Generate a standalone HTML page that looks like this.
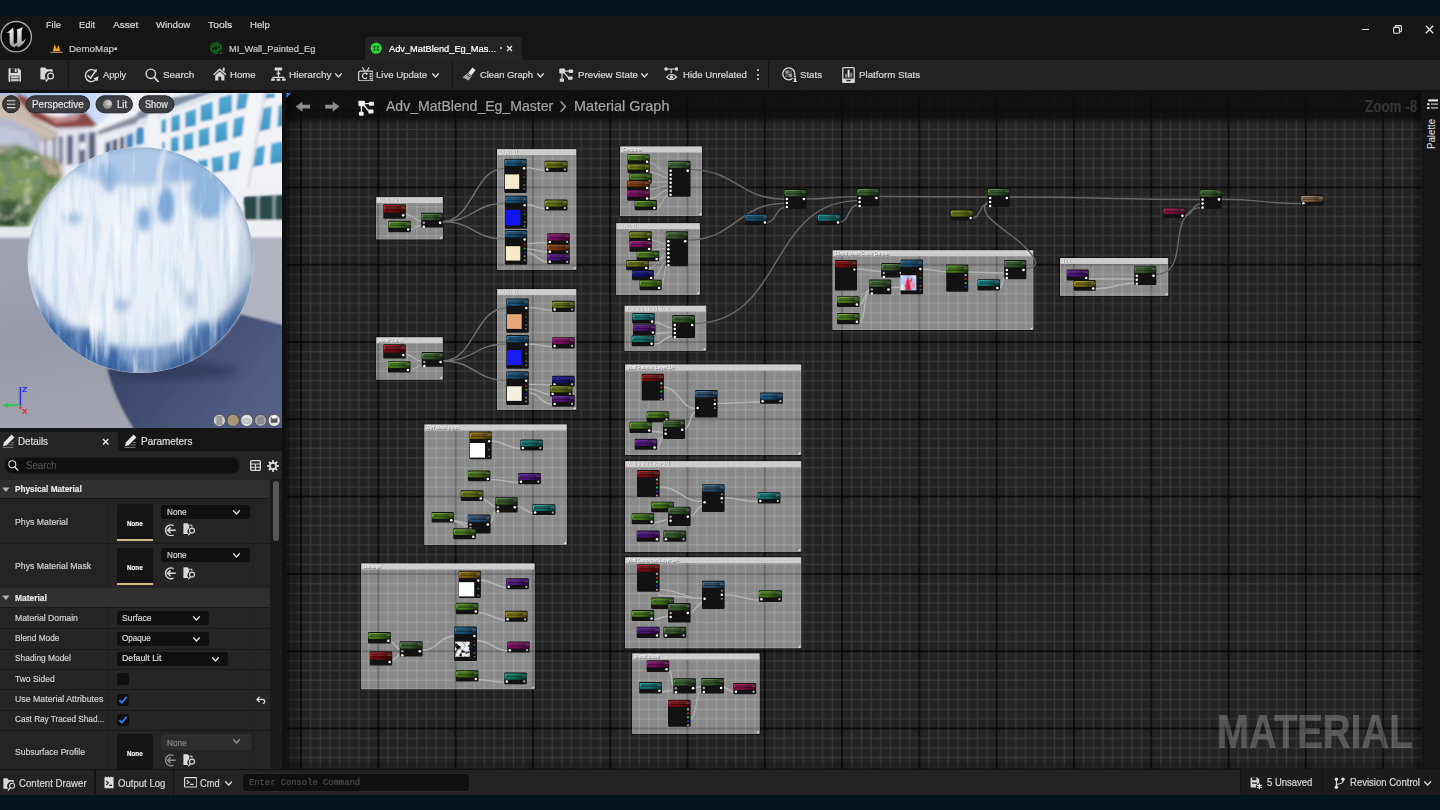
<!DOCTYPE html>
<html><head><meta charset="utf-8"><title>Adv_MatBlend_Eg_Master</title>
<style>
html,body{margin:0;padding:0}
body{width:1440px;height:810px;overflow:hidden;position:relative;background:#03141c;font-family:"Liberation Sans",sans-serif}
.b{position:absolute;display:block}
.t{position:absolute;display:block;white-space:pre;transform-origin:0 50%;-webkit-text-stroke:0.22px}
</style></head>
<body>
<div class="b" style="left:0.00px;top:15.60px;width:1440.00px;height:779.20px;background:#151515;"></div>
<div class="b" style="left:0.00px;top:59.50px;width:1440.00px;height:30.00px;background:#222222;"></div>
<div class="b" style="left:0.00px;top:89.50px;width:1440.00px;height:3.60px;background:#101010;"></div>
<svg class="b" style="left:0.00px;top:20.00px;" width="33" height="33" viewBox="0 0 33 33"><defs><linearGradient id="ug" x1="0" y1="0" x2="0" y2="1"><stop offset="0" stop-color="#f6f6f6"/><stop offset="0.6" stop-color="#c8c8c8"/><stop offset="1" stop-color="#8c8c8c"/></linearGradient></defs><circle cx="16.2" cy="16.7" r="15.2" fill="#090909" stroke="#a6a6a6" stroke-width="1.4"/><path d="M6.0 13.0 C8.6 12.0 10.8 10.2 12.8 7.6 C13.4 9.0 13.6 10.0 13.6 11.2 L13.6 22.4 C13.6 23.6 14.4 24.0 15.4 23.6 L17.2 22.6 L17.2 11.4 C17.2 10.6 16.8 10.0 16.2 9.8 C18.6 9.2 21.2 8.2 23.4 6.8 C22.2 8.6 21.6 9.8 21.6 11.4 L21.6 20.8 C21.6 21.8 22.4 21.8 23.4 21.0 L26.0 18.6 C25.0 22.4 22.0 25.6 18.4 27.4 L16.4 25.6 L14.6 27.6 C11.8 27.0 9.6 25.2 9.6 22.6 L9.6 13.6 C9.6 12.6 8.6 12.4 6.0 13.0 Z" fill="url(#ug)"/></svg>
<div class="b" style="left:365.00px;top:37.00px;width:157.00px;height:23.00px;background:#242424;border-radius:4px 4px 0 0"></div>
<svg class="b" style="left:50.00px;top:42.60px;" width="13" height="11" viewBox="0 0 13 11"><path d="M2.8 8.2 L3.6 5 L4.8 1 L6 5 L6.6 6 L7.2 5 L8.2 2 L9.4 5 L10.2 8.2 Z" fill="#f0a81c"/><rect x="0.4" y="8.8" width="12.2" height="1" fill="#c89a6a"/></svg>
<svg class="b" style="left:209.50px;top:41.50px;" width="13.5" height="13.5" viewBox="0 0 13.5 13.5"><circle cx="6" cy="6" r="5.2" fill="#0e2a12" stroke="#1f7a2a" stroke-width="1.2"/><path d="M3 6 A3 3 0 0 1 8.4 4.2 M9 6 A3 3 0 0 1 3.6 7.8" stroke="#1f8a2c" stroke-width="1.1" fill="none"/><circle cx="10.6" cy="10.8" r="2.4" fill="#151515"/><path d="M9.2 10.8 L10.4 12 L12.2 9.8" stroke="#1f8a2c" stroke-width="1" fill="none"/></svg>
<svg class="b" style="left:370.20px;top:41.80px;" width="12.4" height="12.4" viewBox="0 0 12.4 12.4"><circle cx="6.2" cy="6.2" r="5.6" fill="#2fd03a"/><path d="M3.2 3.4 L6.2 5 L9.2 3.4 L8 6.2 L9.2 9 L6.2 7.6 L3.2 9 L4.4 6.2 Z" fill="#0c3a10"/><circle cx="6.2" cy="6.2" r="1.3" fill="#2fd03a"/></svg>
<div class="b" style="left:499.60px;top:47.20px;width:2.20px;height:2.20px;background:#dddddd;border-radius:50%"></div>
<svg class="b" style="left:506.00px;top:44.60px;" width="7" height="7" viewBox="0 0 7 7"><path d="M1 1 L6 6 M6 1 L1 6" stroke="#e8e8e8" stroke-width="1.3"/></svg>
<div class="b" style="left:1361.80px;top:28.60px;width:7.60px;height:1.20px;background:#e0e0e0;"></div>
<svg class="b" style="left:1392.60px;top:24.60px;" width="9" height="9" viewBox="0 0 9 9"><rect x="0.6" y="2.4" width="5.8" height="5.8" rx="1" fill="none" stroke="#e0e0e0" stroke-width="1.1"/><path d="M2.4 2.2 V1.4 Q2.4 0.6 3.2 0.6 H7.6 Q8.4 0.6 8.4 1.4 V5.8 Q8.4 6.6 7.6 6.6 H6.6" fill="none" stroke="#e0e0e0" stroke-width="1.1"/></svg>
<svg class="b" style="left:1424.60px;top:24.60px;" width="9" height="9" viewBox="0 0 9 9"><path d="M0.8 0.8 L8.2 8.2 M8.2 0.8 L0.8 8.2" stroke="#e8e8e8" stroke-width="1.3"/></svg>
<svg class="b" style="left:7.60px;top:67.80px;" width="14" height="14" viewBox="0 0 14 14"><path d="M0.5 1 Q0.5 0.3 1.2 0.3 L10.6 0.3 L13 2.6 L13 13 Q13 13.7 12.3 13.7 L1.2 13.7 Q0.5 13.7 0.5 13 Z" fill="#d8d8d8"/><rect x="2.6" y="0.3" width="7" height="4.6" fill="#2a2a2a"/><rect x="6.8" y="1" width="1.8" height="3" fill="#d8d8d8"/><rect x="2.2" y="7.6" width="9.2" height="6.1" fill="#2a2a2a"/><rect x="2.9" y="8.3" width="7.8" height="2" fill="#d8d8d8"/><rect x="2.9" y="11.2" width="7.8" height="1.7" fill="#d8d8d8"/></svg>
<svg class="b" style="left:40.00px;top:67.20px;" width="15.5" height="15" viewBox="0 0 15.5 15"><path d="M0.4 1.2 Q0.4 0.4 1.2 0.4 L5 0.4 L6.6 2.2 L12.6 2.2 L12.6 5.4 A4.6 4.6 0 0 0 6.6 12.6 L1.2 12.6 Q0.4 12.6 0.4 11.8 Z" fill="#d8d8d8"/><circle cx="10.6" cy="9" r="2.9" fill="none" stroke="#d8d8d8" stroke-width="1.3"/><path d="M8.6 11.2 L6.2 14" stroke="#d8d8d8" stroke-width="1.5" stroke-linecap="round"/></svg>
<div class="b" style="left:67.80px;top:61.00px;width:1.00px;height:27.00px;background:#131313;"></div>
<svg class="b" style="left:84.00px;top:67.60px;" width="15" height="15" viewBox="0 0 15 15"><path d="M12.4 4.2 A6 6 0 1 0 13.2 9.4" fill="none" stroke="#d8d8d8" stroke-width="1.4"/><path d="M14.6 8.2 L13.6 13.2 L9.4 10.6 Z" fill="#d8d8d8"/><path d="M3.6 7.4 L6.6 10.2 L12.6 1.4" fill="none" stroke="#d8d8d8" stroke-width="1.5"/></svg>
<svg class="b" style="left:145.00px;top:67.60px;" width="14.5" height="14.5" viewBox="0 0 14.5 14.5"><circle cx="5.8" cy="5.8" r="4.7" fill="none" stroke="#d8d8d8" stroke-width="1.4"/><path d="M9.2 9.4 L13.2 13.6" stroke="#d8d8d8" stroke-width="1.7" stroke-linecap="round"/></svg>
<svg class="b" style="left:212.60px;top:67.40px;" width="14" height="14" viewBox="0 0 14 14"><path d="M6.8 1.2 L13.4 7.2 L12.4 8.2 L6.8 3.2 L1.2 8.2 L0.2 7.2 Z" fill="#d8d8d8"/><path d="M2.2 8.4 L6.8 4.4 L11.4 8.4 L11.4 13.6 L8.2 13.6 L8.2 9.8 L5.4 9.8 L5.4 13.6 L2.2 13.6 Z" fill="#d8d8d8"/><rect x="9.8" y="0.6" width="1.8" height="3.6" fill="#d8d8d8"/></svg>
<svg class="b" style="left:270.60px;top:67.40px;" width="15" height="14" viewBox="0 0 15 14"><rect x="3.6" y="0.4" width="7.6" height="3.2" rx="0.5" fill="#d8d8d8"/><rect x="5.6" y="5.6" width="3.6" height="1.8" fill="#d8d8d8"/><path d="M7.4 3.6 V10.4 M2 12 V10.4 H12.8 V12" fill="none" stroke="#d8d8d8" stroke-width="1.1"/><rect x="0.2" y="11.6" width="3.6" height="2.2" fill="#d8d8d8"/><rect x="5.6" y="11.6" width="3.6" height="2.2" fill="#d8d8d8"/><rect x="11" y="11.6" width="3.6" height="2.2" fill="#d8d8d8"/></svg>
<svg class="b" style="left:335.00px;top:73.00px;" width="7" height="5" viewBox="0 0 7 5"><path d="M0.6 0.8 L3.5 4 L6.4 0.8" fill="none" stroke="#d8d8d8" stroke-width="1.3" stroke-linecap="round" stroke-linejoin="round"/></svg>
<svg class="b" style="left:357.60px;top:67.00px;" width="15.6" height="14.4" viewBox="0 0 15.6 14.4"><path d="M4.4 0.4 L6.8 4 M11.2 0.4 L8.8 4" stroke="#d8d8d8" stroke-width="1.1" fill="none"/><rect x="0.6" y="4.2" width="14.4" height="9.6" rx="1.6" fill="none" stroke="#d8d8d8" stroke-width="1.2"/><path d="M8.4 6.6 A2.6 2.6 0 1 0 9 10.6" fill="none" stroke="#d8d8d8" stroke-width="1.2"/><path d="M7.4 5.6 L10.2 6.2 L8.6 8.4 Z" fill="#d8d8d8"/><rect x="11.6" y="6" width="2" height="1.6" fill="#d8d8d8"/><rect x="11.6" y="8.6" width="2" height="1.6" fill="#d8d8d8"/><rect x="11.6" y="11" width="2" height="1.4" fill="#d8d8d8"/></svg>
<svg class="b" style="left:432.00px;top:73.00px;" width="7" height="5" viewBox="0 0 7 5"><path d="M0.6 0.8 L3.5 4 L6.4 0.8" fill="none" stroke="#d8d8d8" stroke-width="1.3" stroke-linecap="round" stroke-linejoin="round"/></svg>
<div class="b" style="left:451.60px;top:61.00px;width:1.00px;height:27.00px;background:#131313;"></div>
<svg class="b" style="left:462.00px;top:67.40px;" width="14.5" height="14.5" viewBox="0 0 14.5 14.5"><path d="M10.4 0.6 L13.6 3 L9.4 8.4 L6.2 6 Z" fill="#e6e6e6"/><path d="M5.4 6 L9.8 9.4 L6.6 13.6 L0.6 10.6 Z" fill="#a8a8a8"/><path d="M4.6 7.4 L8.6 10.4" stroke="#222" stroke-width="0.9"/></svg>
<svg class="b" style="left:537.00px;top:73.00px;" width="7" height="5" viewBox="0 0 7 5"><path d="M0.6 0.8 L3.5 4 L6.4 0.8" fill="none" stroke="#d8d8d8" stroke-width="1.3" stroke-linecap="round" stroke-linejoin="round"/></svg>
<svg class="b" style="left:559.40px;top:67.60px;" width="14.6" height="14.4" viewBox="0 0 14.6 14.4"><rect x="0.3" y="0.6" width="5.8" height="4.8" rx="1" fill="#d8d8d8"/><rect x="9.6" y="1.6" width="4.6" height="3.4" rx="0.9" fill="#d8d8d8"/><rect x="9" y="8.4" width="4.6" height="3.4" rx="0.9" fill="#d8d8d8"/><rect x="0.8" y="10.4" width="4.2" height="3.4" rx="0.9" fill="#d8d8d8"/><path d="M6 3.2 H9.8 M3 5.2 V10.6 M5.2 4.6 L9.4 9.6" stroke="#d8d8d8" stroke-width="1.2" fill="none"/></svg>
<svg class="b" style="left:641.40px;top:73.00px;" width="7" height="5" viewBox="0 0 7 5"><path d="M0.6 0.8 L3.5 4 L6.4 0.8" fill="none" stroke="#d8d8d8" stroke-width="1.3" stroke-linecap="round" stroke-linejoin="round"/></svg>
<svg class="b" style="left:663.80px;top:67.40px;" width="14.6" height="14" viewBox="0 0 14.6 14"><circle cx="2" cy="2" r="1.8" fill="#d8d8d8"/><circle cx="12.6" cy="2" r="1.8" fill="#d8d8d8"/><path d="M2 2 H12.6 M7.2 2 V6" stroke="#d8d8d8" stroke-width="1.1"/><path d="M2.4 10 Q7.4 4.6 12.6 10 Q7.4 15 2.4 10 Z" fill="none" stroke="#d8d8d8" stroke-width="1.1"/><circle cx="7.5" cy="10" r="1.7" fill="#d8d8d8"/></svg>
<div class="b" style="left:757.20px;top:69.40px;width:1.80px;height:1.80px;background:#d8d8d8;border-radius:50%"></div>
<div class="b" style="left:757.20px;top:73.80px;width:1.80px;height:1.80px;background:#d8d8d8;border-radius:50%"></div>
<div class="b" style="left:757.20px;top:78.20px;width:1.80px;height:1.80px;background:#d8d8d8;border-radius:50%"></div>
<div class="b" style="left:768.40px;top:61.00px;width:1.00px;height:27.00px;background:#131313;"></div>
<svg class="b" style="left:781.60px;top:67.00px;" width="15.4" height="15.4" viewBox="0 0 15.4 15.4"><circle cx="6.8" cy="6.8" r="6" fill="none" stroke="#d8d8d8" stroke-width="1.3"/><rect x="3.4" y="3.4" width="3.4" height="3.4" fill="#9a9a9a"/><rect x="6.8" y="6.8" width="3.4" height="3.4" fill="#9a9a9a"/><rect x="6.8" y="3.4" width="3.4" height="3.4" fill="#555"/><rect x="3.4" y="6.8" width="3.4" height="3.4" fill="#555"/><rect x="10.6" y="8.6" width="4.6" height="6.4" fill="#222"/><rect x="12.2" y="8.8" width="1.8" height="1.6" fill="#eee"/><path d="M11.6 11.2 H14 V14 H15 V15 H11.4 V14 H12.4 V12.2 H11.6 Z" fill="#eee"/></svg>
<svg class="b" style="left:841.60px;top:66.60px;" width="13" height="16.2" viewBox="0 0 13 16.2"><rect x="0.8" y="0.6" width="11.4" height="15" rx="1.2" fill="none" stroke="#d8d8d8" stroke-width="1.3"/><rect x="0.8" y="11.6" width="11.4" height="4" fill="#d8d8d8"/><rect x="4.4" y="12.8" width="4.2" height="1.5" fill="#222"/><rect x="3" y="7" width="1.8" height="3.4" fill="#8a8a8a"/><rect x="5.6" y="2.8" width="1.9" height="7.6" fill="#f0f0f0"/><rect x="8.3" y="5.6" width="1.8" height="4.8" fill="#8a8a8a"/></svg>
<div class="b" style="left:0.00px;top:428.20px;width:282.20px;height:340.40px;background:#151515;"></div>
<div class="b" style="left:282.20px;top:93.00px;width:4.00px;height:675.60px;background:#101010;"></div>
<div class="b" style="left:0.00px;top:432.00px;width:118.40px;height:19.60px;background:#242424;border-radius:0 3px 0 0"></div>
<svg class="b" style="left:1.60px;top:434.40px;" width="13" height="14" viewBox="0 0 13 14"><path d="M9.6 0.6 L12.4 3.4 L4.6 11.2 L1 12.2 L1.9 8.4 Z" fill="#e6e6e6"/><path d="M0.4 13.4 H11.6 M6.4 10.9 H11.6 M8.8 8.5 H11.6" stroke="#777" stroke-width="1"/></svg>
<svg class="b" style="left:101.60px;top:437.60px;" width="7.4" height="7.4" viewBox="0 0 7.4 7.4"><path d="M1 1 L6.4 6.4 M6.4 1 L1 6.4" stroke="#e8e8e8" stroke-width="1.4"/></svg>
<svg class="b" style="left:123.80px;top:434.40px;" width="13" height="14" viewBox="0 0 13 14"><path d="M9.6 0.6 L12.4 3.4 L4.6 11.2 L1 12.2 L1.9 8.4 Z" fill="#e6e6e6"/><path d="M0.4 13.4 H11.6 M6.4 10.9 H11.6 M8.8 8.5 H11.6" stroke="#777" stroke-width="1"/></svg>
<div class="b" style="left:0.00px;top:451.40px;width:282.20px;height:317.20px;background:#242424;"></div>
<div class="b" style="left:4.60px;top:457.60px;width:234.40px;height:15.60px;background:#0f0f0f;border-radius:8px;box-shadow:0 0 0 1px #1a1a1a"></div>
<svg class="b" style="left:8.40px;top:460.20px;" width="10.73" height="10.73" viewBox="0 0 14.5 14.5"><circle cx="5.8" cy="5.8" r="4.7" fill="none" stroke="#e0e0e0" stroke-width="1.4"/><path d="M9.2 9.4 L13.2 13.6" stroke="#e0e0e0" stroke-width="1.7" stroke-linecap="round"/></svg>
<svg class="b" style="left:249.60px;top:460.20px;" width="11" height="11" viewBox="0 0 11 11"><rect x="0.7" y="0.7" width="9.6" height="9.6" rx="1" fill="none" stroke="#e0e0e0" stroke-width="1.3"/><path d="M0.7 4 H10.3 M0.7 7.2 H10.3 M5.5 4 V10.3" stroke="#e0e0e0" stroke-width="1.1"/></svg>
<svg class="b" style="left:267.00px;top:460.00px;" width="12" height="12" viewBox="0 0 12 12"><g transform="translate(6,6)"><circle r="3.1" fill="none" stroke="#e0e0e0" stroke-width="1.7"/><rect x="-0.9" y="-5.9" width="1.8" height="2.3" fill="#e0e0e0" transform="rotate(0)"/><rect x="-0.9" y="-5.9" width="1.8" height="2.3" fill="#e0e0e0" transform="rotate(45)"/><rect x="-0.9" y="-5.9" width="1.8" height="2.3" fill="#e0e0e0" transform="rotate(90)"/><rect x="-0.9" y="-5.9" width="1.8" height="2.3" fill="#e0e0e0" transform="rotate(135)"/><rect x="-0.9" y="-5.9" width="1.8" height="2.3" fill="#e0e0e0" transform="rotate(180)"/><rect x="-0.9" y="-5.9" width="1.8" height="2.3" fill="#e0e0e0" transform="rotate(225)"/><rect x="-0.9" y="-5.9" width="1.8" height="2.3" fill="#e0e0e0" transform="rotate(270)"/><rect x="-0.9" y="-5.9" width="1.8" height="2.3" fill="#e0e0e0" transform="rotate(315)"/></g></svg>
<div class="b" style="left:270.00px;top:479.40px;width:12.20px;height:289.20px;background:#1a1a1a;"></div>
<div class="b" style="left:273.20px;top:481.00px;width:5.80px;height:59.60px;background:#575757;border-radius:3px"></div>
<div class="b" style="left:0.00px;top:480.00px;width:270.00px;height:18.40px;background:#2f2f2f;"></div>
<svg class="b" style="left:1.60px;top:486.60px;" width="8" height="5.4" viewBox="0 0 8 5.4"><path d="M0.3 0.4 H7.5 L3.9 5 Z" fill="#b4b4b4"/></svg>
<div class="b" style="left:0.00px;top:498.40px;width:270.00px;height:1.00px;background:#191919;"></div>
<div class="b" style="left:117.00px;top:504.00px;width:36.40px;height:36.60px;background:#141414;border-radius:2px"></div>
<div class="b" style="left:161.20px;top:505.00px;width:89.20px;height:13.80px;background:#0f0f0f;border-radius:3px"></div>
<svg class="b" style="left:233.40px;top:509.60px;" width="7" height="5" viewBox="0 0 7 5"><path d="M0.6 0.8 L3.5 4 L6.4 0.8" fill="none" stroke="#e0e0e0" stroke-width="1.3" stroke-linecap="round" stroke-linejoin="round"/></svg>
<svg class="b" style="left:163.80px;top:523.80px;" width="12.6" height="12.6" viewBox="0 0 12.6 12.6"><path d="M9.6 1.6 A5.4 5.4 0 1 0 9.6 11" fill="none" stroke="#d8d8d8" stroke-width="1.3"/><path d="M11.8 6.3 H4 M6.6 3.4 L3.6 6.3 L6.6 9.2" fill="none" stroke="#d8d8d8" stroke-width="1.5"/></svg>
<svg class="b" style="left:183.40px;top:523.40px;" width="13" height="12.6" viewBox="0 0 13 12.6"><path d="M0.4 0.9 Q0.4 0.3 1 0.3 L4.6 0.3 L6.2 2 L6.2 5 A4 4 0 0 0 5.4 11 L1 11 Q0.4 11 0.4 10.4 Z" fill="#d8d8d8"/><path d="M6.4 2.2 H9 V4" stroke="#d8d8d8" stroke-width="1" fill="none"/><circle cx="9" cy="7.6" r="2.5" fill="none" stroke="#d8d8d8" stroke-width="1.2"/><path d="M7.4 9.6 L5.6 11.8" stroke="#d8d8d8" stroke-width="1.3" stroke-linecap="round"/></svg>
<div class="b" style="left:117.00px;top:539.40px;width:36.40px;height:1.40px;background:#cdbd84;"></div>
<div class="b" style="left:0.00px;top:543.20px;width:270.00px;height:1.00px;background:#191919;"></div>
<div class="b" style="left:117.00px;top:547.60px;width:36.40px;height:37.00px;background:#141414;border-radius:2px"></div>
<div class="b" style="left:161.20px;top:548.40px;width:89.20px;height:14.00px;background:#0f0f0f;border-radius:3px"></div>
<svg class="b" style="left:233.40px;top:553.00px;" width="7" height="5" viewBox="0 0 7 5"><path d="M0.6 0.8 L3.5 4 L6.4 0.8" fill="none" stroke="#e0e0e0" stroke-width="1.3" stroke-linecap="round" stroke-linejoin="round"/></svg>
<svg class="b" style="left:163.80px;top:567.40px;" width="12.6" height="12.6" viewBox="0 0 12.6 12.6"><path d="M9.6 1.6 A5.4 5.4 0 1 0 9.6 11" fill="none" stroke="#d8d8d8" stroke-width="1.3"/><path d="M11.8 6.3 H4 M6.6 3.4 L3.6 6.3 L6.6 9.2" fill="none" stroke="#d8d8d8" stroke-width="1.5"/></svg>
<svg class="b" style="left:183.40px;top:567.00px;" width="13" height="12.6" viewBox="0 0 13 12.6"><path d="M0.4 0.9 Q0.4 0.3 1 0.3 L4.6 0.3 L6.2 2 L6.2 5 A4 4 0 0 0 5.4 11 L1 11 Q0.4 11 0.4 10.4 Z" fill="#d8d8d8"/><path d="M6.4 2.2 H9 V4" stroke="#d8d8d8" stroke-width="1" fill="none"/><circle cx="9" cy="7.6" r="2.5" fill="none" stroke="#d8d8d8" stroke-width="1.2"/><path d="M7.4 9.6 L5.6 11.8" stroke="#d8d8d8" stroke-width="1.3" stroke-linecap="round"/></svg>
<div class="b" style="left:117.00px;top:583.40px;width:36.40px;height:1.40px;background:#cdbd84;"></div>
<div class="b" style="left:0.00px;top:587.60px;width:270.00px;height:1.00px;background:#191919;"></div>
<div class="b" style="left:0.00px;top:588.40px;width:270.00px;height:18.40px;background:#2f2f2f;"></div>
<svg class="b" style="left:1.60px;top:595.00px;" width="8" height="5.4" viewBox="0 0 8 5.4"><path d="M0.3 0.4 H7.5 L3.9 5 Z" fill="#b4b4b4"/></svg>
<div class="b" style="left:0.00px;top:606.80px;width:270.00px;height:1.00px;background:#191919;"></div>
<div class="b" style="left:117.20px;top:611.40px;width:92.20px;height:14.00px;background:#0f0f0f;border-radius:3px"></div>
<svg class="b" style="left:193.20px;top:616.30px;" width="7" height="5" viewBox="0 0 7 5"><path d="M0.6 0.8 L3.5 4 L6.4 0.8" fill="none" stroke="#e6e6e6" stroke-width="1.3" stroke-linecap="round" stroke-linejoin="round"/></svg>
<div class="b" style="left:0.00px;top:628.20px;width:270.00px;height:1.00px;background:#191919;"></div>
<div class="b" style="left:117.20px;top:631.60px;width:92.20px;height:14.00px;background:#0f0f0f;border-radius:3px"></div>
<svg class="b" style="left:193.20px;top:636.50px;" width="7" height="5" viewBox="0 0 7 5"><path d="M0.6 0.8 L3.5 4 L6.4 0.8" fill="none" stroke="#e6e6e6" stroke-width="1.3" stroke-linecap="round" stroke-linejoin="round"/></svg>
<div class="b" style="left:0.00px;top:648.50px;width:270.00px;height:1.00px;background:#191919;"></div>
<div class="b" style="left:117.20px;top:651.80px;width:110.40px;height:14.10px;background:#0f0f0f;border-radius:3px"></div>
<svg class="b" style="left:212.20px;top:656.70px;" width="7" height="5" viewBox="0 0 7 5"><path d="M0.6 0.8 L3.5 4 L6.4 0.8" fill="none" stroke="#e6e6e6" stroke-width="1.3" stroke-linecap="round" stroke-linejoin="round"/></svg>
<div class="b" style="left:0.00px;top:668.80px;width:270.00px;height:1.00px;background:#191919;"></div>
<div class="b" style="left:117.20px;top:673.20px;width:11.80px;height:11.80px;background:#0f0f0f;border-radius:2px"></div>
<div class="b" style="left:0.00px;top:689.20px;width:270.00px;height:1.00px;background:#191919;"></div>
<div class="b" style="left:117.20px;top:693.80px;width:11.80px;height:11.80px;background:#0f0f0f;border-radius:2px"></div>
<svg class="b" style="left:117.20px;top:693.80px;" width="11.8" height="11.8" viewBox="0 0 11.8 11.8"><path d="M2.4 6.2 L4.8 8.6 L9.6 2.8" fill="none" stroke="#2a7fe8" stroke-width="1.9"/></svg>
<svg class="b" style="left:256.40px;top:695.60px;" width="10" height="8" viewBox="0 0 10 8"><path d="M3.6 0.8 L0.9 3.4 L3.6 6 M1.2 3.4 H6.4 Q8.8 3.4 8.8 5.6 Q8.8 7.4 6.8 7.4" fill="none" stroke="#dcdcdc" stroke-width="1.2"/></svg>
<div class="b" style="left:0.00px;top:709.60px;width:270.00px;height:1.00px;background:#191919;"></div>
<div class="b" style="left:117.20px;top:714.40px;width:11.80px;height:11.80px;background:#0f0f0f;border-radius:2px"></div>
<svg class="b" style="left:117.20px;top:714.40px;" width="11.8" height="11.8" viewBox="0 0 11.8 11.8"><path d="M2.4 6.2 L4.8 8.6 L9.6 2.8" fill="none" stroke="#2a7fe8" stroke-width="1.9"/></svg>
<div class="b" style="left:0.00px;top:730.20px;width:270.00px;height:1.00px;background:#191919;"></div>
<div class="b" style="left:117.00px;top:734.40px;width:36.40px;height:34.60px;background:#141414;border-radius:2px"></div>
<div class="b" style="left:161.20px;top:734.00px;width:90.00px;height:16.00px;background:#2e2e2e;border-radius:3px"></div>
<svg class="b" style="left:233.40px;top:738.60px;" width="7" height="5" viewBox="0 0 7 5"><path d="M0.6 0.8 L3.5 4 L6.4 0.8" fill="none" stroke="#9a9a9a" stroke-width="1.3" stroke-linecap="round" stroke-linejoin="round"/></svg>
<svg class="b" style="left:163.80px;top:754.40px;" width="12.6" height="12.6" viewBox="0 0 12.6 12.6"><path d="M9.6 1.6 A5.4 5.4 0 1 0 9.6 11" fill="none" stroke="#8c8c8c" stroke-width="1.3"/><path d="M11.8 6.3 H4 M6.6 3.4 L3.6 6.3 L6.6 9.2" fill="none" stroke="#8c8c8c" stroke-width="1.5"/></svg>
<svg class="b" style="left:183.40px;top:754.00px;" width="13" height="12.6" viewBox="0 0 13 12.6"><path d="M0.4 0.9 Q0.4 0.3 1 0.3 L4.6 0.3 L6.2 2 L6.2 5 A4 4 0 0 0 5.4 11 L1 11 Q0.4 11 0.4 10.4 Z" fill="#d8d8d8"/><path d="M6.4 2.2 H9 V4" stroke="#d8d8d8" stroke-width="1" fill="none"/><circle cx="9" cy="7.6" r="2.5" fill="none" stroke="#d8d8d8" stroke-width="1.2"/><path d="M7.4 9.6 L5.6 11.8" stroke="#d8d8d8" stroke-width="1.3" stroke-linecap="round"/></svg>
<div class="b" style="left:106.60px;top:499.00px;width:1.00px;height:89.00px;background:rgba(0,0,0,0.10);"></div>
<div class="b" style="left:106.60px;top:607.00px;width:1.00px;height:162.00px;background:rgba(0,0,0,0.10);"></div>
<div class="b" style="left:252.60px;top:499.00px;width:1.00px;height:89.00px;background:rgba(0,0,0,0.12);"></div>
<div class="b" style="left:252.60px;top:607.00px;width:1.00px;height:162.00px;background:rgba(0,0,0,0.12);"></div>
<div class="b" style="left:0.00px;top:768.60px;width:1440.00px;height:26.20px;background:#222222;"></div>
<div class="b" style="left:0.00px;top:768.60px;width:1440.00px;height:1.00px;background:#121212;"></div>
<div class="b" style="left:1240.00px;top:768.60px;width:200.00px;height:26.20px;background:#1b1b1b;"></div>
<div class="b" style="left:94.40px;top:769.00px;width:1.20px;height:26.00px;background:#131313;"></div>
<div class="b" style="left:173.00px;top:769.00px;width:1.20px;height:26.00px;background:#131313;"></div>
<div class="b" style="left:1239.60px;top:769.00px;width:1.20px;height:26.00px;background:#131313;"></div>
<div class="b" style="left:1321.60px;top:769.00px;width:1.20px;height:26.00px;background:#131313;"></div>
<svg class="b" style="left:2.60px;top:778.00px;" width="13.33" height="12.9" viewBox="0 0 15.5 15"><path d="M0.4 1.2 Q0.4 0.4 1.2 0.4 L5 0.4 L6.6 2.2 L12.6 2.2 L12.6 5.4 A4.6 4.6 0 0 0 6.6 12.6 L1.2 12.6 Q0.4 12.6 0.4 11.8 Z" fill="#d8d8d8"/><circle cx="10.6" cy="9" r="2.9" fill="none" stroke="#d8d8d8" stroke-width="1.3"/><path d="M8.6 11.2 L6.2 14" stroke="#d8d8d8" stroke-width="1.5" stroke-linecap="round"/></svg>
<svg class="b" style="left:104.40px;top:776.40px;" width="10.4" height="12.6" viewBox="0 0 10.4 12.6"><path d="M0.5 1.6 L1.8 0.4 L3.1 1.6 L4.4 0.4 L5.7 1.6 L7 0.4 L8.3 1.6 L9.6 0.4 V12.2 H0.5 Z" fill="#dcdcdc"/><path d="M2.2 5 L4.4 7 L2.2 9 M5.2 9.4 H8" stroke="#222" stroke-width="1.1" fill="none"/></svg>
<svg class="b" style="left:184.00px;top:777.40px;" width="13.4" height="10.6" viewBox="0 0 13.4 10.6"><rect x="0.6" y="0.6" width="12.2" height="9.4" rx="0.8" fill="none" stroke="#dcdcdc" stroke-width="1.2"/><path d="M2.8 3.4 L5 5.2 L2.8 7 M6 7.4 H9.6" stroke="#dcdcdc" stroke-width="1.1" fill="none"/></svg>
<svg class="b" style="left:225.00px;top:781.40px;" width="7.4" height="5" viewBox="0 0 7.4 5"><path d="M0.6 0.8 L3.7 4 L6.8 0.8" fill="none" stroke="#e0e0e0" stroke-width="1.3" stroke-linecap="round" stroke-linejoin="round"/></svg>
<div class="b" style="left:242.60px;top:773.60px;width:226.00px;height:17.00px;background:#0f0f0f;border-radius:3px;box-shadow:0 0 0 1px #2a2a2a"></div>
<svg class="b" style="left:1250.40px;top:776.60px;" width="13" height="13" viewBox="0 0 13 13"><path d="M0.6 1 Q0.6 0.4 1.2 0.4 L7.4 0.4 L9.2 2.2 V6 L6 8 V10.6 H1.2 Q0.6 10.6 0.6 10 Z" fill="#d8d8d8"/><rect x="2.2" y="0.4" width="4.2" height="2.8" fill="#222"/><rect x="2.2" y="5.4" width="5" height="1.4" fill="#222"/><path d="M9.4 6.6 V12 M6.9 8 L11.9 10.8 M11.9 8 L6.9 10.8" stroke="#f0f0f0" stroke-width="1.2"/></svg>
<svg class="b" style="left:1334.40px;top:776.80px;" width="11.4" height="12.4" viewBox="0 0 11.4 12.4"><circle cx="2.4" cy="2.2" r="1.7" fill="#e0e0e0"/><circle cx="9" cy="2.2" r="1.7" fill="#e0e0e0"/><circle cx="2.4" cy="10.2" r="1.7" fill="#e0e0e0"/><path d="M2.4 2.2 V10.2 M9 2.2 V4.4 Q9 6.2 2.6 7.4" fill="none" stroke="#e0e0e0" stroke-width="1.1"/></svg>
<svg class="b" style="left:1424.40px;top:781.20px;" width="7.2" height="5" viewBox="0 0 7.2 5"><path d="M0.6 0.8 L3.6 4 L6.6 0.8" fill="none" stroke="#e0e0e0" stroke-width="1.3" stroke-linecap="round" stroke-linejoin="round"/></svg>
<div class="b" style="left:1421.80px;top:93.00px;width:18.20px;height:675.60px;background:#151515;"></div>
<svg class="b" style="left:1427.00px;top:99.20px;" width="11.4" height="10.6" viewBox="0 0 11.4 10.6"><rect x="1.2" y="0.4" width="9.8" height="2" fill="#f0f0f0"/><rect x="0.2" y="4.2" width="2.2" height="2" fill="#f0f0f0"/><rect x="4" y="4.4" width="7" height="1.4" fill="#aaa"/><rect x="0.2" y="8" width="2.2" height="2" fill="#f0f0f0"/><rect x="4" y="8.2" width="7" height="1.4" fill="#aaa"/></svg>
<div class="b" style="left:1426.6px;top:149.4px;transform-origin:0 0;transform:rotate(-90deg) scaleX(0.97);font:400 10px/10px 'Liberation Sans',sans-serif;color:#e0e0e0;white-space:pre">Palette</div>
<svg class="b" style="left:0;top:93px" width="282.2" height="335.2" viewBox="0 93 282.2 335.2"><defs><filter id="b1" x="-5%" y="-5%" width="110%" height="110%"><feGaussianBlur stdDeviation="0.8"/></filter><filter id="b15" x="-5%" y="-5%" width="110%" height="110%"><feGaussianBlur stdDeviation="1.5"/></filter><filter id="b2" x="-10%" y="-10%" width="120%" height="120%"><feGaussianBlur stdDeviation="2.4"/></filter><filter id="b3" x="-20%" y="-20%" width="140%" height="140%"><feGaussianBlur stdDeviation="3.2"/></filter><filter id="b4" x="-20%" y="-20%" width="140%" height="140%"><feGaussianBlur stdDeviation="5"/></filter><filter id="tree" x="0" y="0" width="1" height="1"><feTurbulence type="fractalNoise" baseFrequency="0.07" numOctaves="3" seed="5"/><feColorMatrix type="matrix" values="0 0 0 0 0.17  0 0 0 0 0.28  0 0 0 0 0.15  4.4 0 0 0 -1.9"/><feGaussianBlur stdDeviation="1.2"/></filter><filter id="tree2" x="0" y="0" width="1" height="1"><feTurbulence type="fractalNoise" baseFrequency="0.09" numOctaves="2" seed="19"/><feColorMatrix type="matrix" values="0 0 0 0 0.80  0 0 0 0 0.72  0 0 0 0 0.60  0 4.0 0 0 -2.2"/><feGaussianBlur stdDeviation="1.4"/></filter><filter id="wstreak" x="0" y="0" width="1" height="1"><feTurbulence type="fractalNoise" baseFrequency="0.085 0.011" numOctaves="4" seed="11"/><feColorMatrix type="matrix" values="0 0 0 0 0.93  0 0 0 0 0.95  0 0 0 0 0.98  3.0 0 0 0 -1.62"/><feGaussianBlur stdDeviation="0.7 1.2"/></filter><filter id="bstreak" x="0" y="0" width="1" height="1"><feTurbulence type="fractalNoise" baseFrequency="0.13 0.016" numOctaves="3" seed="29"/><feColorMatrix type="matrix" values="0 0 0 0 0.40  0 0 0 0 0.58  0 0 0 0 0.80  0 2.4 0 0 -1.12"/><feGaussianBlur stdDeviation="0.4"/></filter><radialGradient id="sph" cx="0.40" cy="0.40" r="0.70"><stop offset="0" stop-color="#eef3f9"/><stop offset="0.6" stop-color="#e7eef6"/><stop offset="0.9" stop-color="#d6e2ef"/><stop offset="1" stop-color="#bccfe4"/></radialGradient><radialGradient id="sphshade" cx="0.40" cy="0.42" r="0.66"><stop offset="0" stop-color="#000" stop-opacity="0"/><stop offset="0.80" stop-color="#1a3058" stop-opacity="0"/><stop offset="1" stop-color="#1a3058" stop-opacity="0.30"/></radialGradient><clipPath id="sclip"><circle cx="140.6" cy="260.0" r="112.8"/></clipPath><clipPath id="vclip"><rect x="0" y="93" width="282.2" height="335.2"/></clipPath><linearGradient id="floorL" x1="0" y1="0" x2="0.3" y2="1"><stop offset="0" stop-color="#a2a5b6"/><stop offset="0.5" stop-color="#979aa9"/><stop offset="1" stop-color="#a3a5b0"/></linearGradient><linearGradient id="shad" x1="0" y1="0" x2="1" y2="0.5"><stop offset="0" stop-color="#323e5e"/><stop offset="0.5" stop-color="#424f74"/><stop offset="1" stop-color="#546186"/></linearGradient><linearGradient id="sky" x1="0" y1="0" x2="1" y2="0"><stop offset="0" stop-color="#9fbdec"/><stop offset="0.55" stop-color="#b8d0f2"/><stop offset="1" stop-color="#eaf0f9"/></linearGradient><linearGradient id="wing" x1="0" y1="0" x2="0" y2="1"><stop offset="0" stop-color="#55acd6"/><stop offset="1" stop-color="#3f97c4"/></linearGradient></defs><g clip-path="url(#vclip)"><g filter="url(#b15)"><rect x="-6" y="86" width="296" height="160" fill="#eef0f5"/><polygon points="-5.3,86.7 133.3,86.7 120.0,100.0 101.3,122.7 92.0,126.7 53.3,108.0 20.0,96.0 -5.3,94.7" fill="url(#sky)" fill-opacity="1"/><polygon points="-5.3,94.7 20.0,96.0 34.7,118.7 58.7,132.0 58.7,161.3 -5.3,148.0" fill="#c4b8ae" fill-opacity="1"/><polygon points="-5.3,117.3 16.0,120.7 40.0,136.0 40.0,154.7 -5.3,145.3" fill="#b4b8d0" fill-opacity="1"/><polygon points="-5.3,109.3 8.0,112.0 57.3,136.0 57.3,141.6 8.0,118.7 -5.3,116.7" fill="#cbbeb0" fill-opacity="1"/><polygon points="-5.3,125.3 26.7,132.0 34.7,148.0 -5.3,145.3" fill="#c2c6da" fill-opacity="1"/><polygon points="16.0,93.3 26.7,97.3 40.0,112.0 56.0,118.7 85.3,112.0 97.3,125.3 92.0,126.9 56.0,128.3 33.3,117.3 18.7,100.0" fill="#8c4844" fill-opacity="1"/><polygon points="44.0,114.7 62.7,117.3 69.3,115.3 82.7,114.7 74.7,120.7 56.0,123.3" fill="#c89494" fill-opacity="0.85"/><polygon points="57.3,128.7 92.0,126.9 96.7,132.0 96.7,148.0 57.3,148.0" fill="#d4d6e2" fill-opacity="1"/><polygon points="58.7,132.0 93.3,128.0 95.3,136.0 58.7,141.3" fill="#e4e6ee" fill-opacity="1"/><polygon points="40.0,142.7 97.3,132.0 97.3,166.7 40.0,166.7" fill="#dcdde8" fill-opacity="1"/><polygon points="58.7,136.4 62.7,135.9 62.7,164.0 58.7,164.7" fill="#7a7e98" fill-opacity="1"/><polygon points="67.3,135.4 72.7,134.7 72.7,164.0 67.3,164.7" fill="#5a6080" fill-opacity="1"/><polygon points="78.7,134.0 85.3,133.2 85.3,164.0 78.7,164.7" fill="#68708c" fill-opacity="1"/><polygon points="88.7,132.8 95.3,132.0 95.3,164.0 88.7,164.7" fill="#56607c" fill-opacity="1"/><polygon points="44.0,138.2 46.9,137.8 46.9,164.0 44.0,164.7" fill="#9a9cb4" fill-opacity="1"/><polygon points="52.7,137.1 56.0,136.7 56.0,164.0 52.7,164.7" fill="#8a8ca8" fill-opacity="1"/><polygon points="79.3,142.7 85.3,142.1 85.3,149.3 79.3,150.1" fill="#f0f0f6" fill-opacity="1"/><polygon points="98.0,130.0 146.7,110.7 146.7,120.7 98.0,135.3" fill="#8a8e9c" fill-opacity="1"/><polygon points="98.0,134.9 146.7,120.3 146.7,128.0 98.0,140.0" fill="#e9ebf1" fill-opacity="1"/><polygon points="98.0,124.0 146.7,104.0 146.7,111.3 98.0,130.7" fill="#f3f4f8" fill-opacity="1"/><polygon points="105.3,142.7 110.7,140.8 110.7,155.4 105.3,156.7" fill="#3a5a8a" fill-opacity="1"/><polygon points="112.7,140.1 117.3,138.4 117.3,153.0 112.7,154.1" fill="#2c4468" fill-opacity="1"/><polygon points="120.0,137.4 124.0,136.0 124.0,150.6 120.0,151.4" fill="#1e2e48" fill-opacity="1"/><polygon points="126.0,135.3 133.3,132.6 133.3,147.3 126.0,149.3" fill="#3f86c0" fill-opacity="1"/><polygon points="136.0,131.7 143.3,129.0 143.3,143.7 136.0,145.7" fill="#4796cc" fill-opacity="1"/></g><g filter="url(#b1)"><polygon points="150.7,90.7 286.7,90.7 286.7,185.3 150.7,185.3" fill="#f1f2f6" fill-opacity="1"/><polygon points="137.3,112.0 173.3,97.3 222.7,88.0 173.3,107.3 137.3,120.7" fill="#7e8ea6" fill-opacity="1"/><polygon points="137.3,104.7 173.3,90.7 225.3,88.0 173.3,97.6 137.3,112.3" fill="#eef0f5" fill-opacity="1"/><polygon points="137.3,120.3 173.3,106.9 220.0,90.7 225.3,93.3 173.3,112.0 137.3,126.7" fill="#dfe3ec" fill-opacity="1"/><polygon points="147.7,114.0 158.1,112.0 158.1,149.3 147.7,149.3" fill="#f2f3f7" fill-opacity="1"/><polygon points="137.3,128.0 142.9,126.9 142.9,142.7 137.3,143.7" fill="#4b8cc4" fill-opacity="1"/><polygon points="161.3,120.3 166.1,118.7 166.1,132.0 161.3,133.3" fill="url(#wing)"/><polygon points="161.3,132.1 166.1,130.8 166.1,132.0 161.3,133.3" fill="#2f7fae" fill-opacity="0.55"/><polygon points="171.3,116.8 180.0,114.1 180.0,130.1 171.3,132.0" fill="url(#wing)"/><polygon points="171.3,130.8 180.0,128.9 180.0,130.1 171.3,132.0" fill="#2f7fae" fill-opacity="0.55"/><polygon points="185.3,112.3 196.0,108.8 196.0,125.3 185.3,127.5" fill="url(#wing)"/><polygon points="185.3,126.3 196.0,124.1 196.0,125.3 185.3,127.5" fill="#2f7fae" fill-opacity="0.55"/><polygon points="200.7,105.6 212.7,101.6 212.7,119.5 200.7,121.6" fill="url(#wing)"/><polygon points="200.7,120.4 212.7,118.3 212.7,119.5 200.7,121.6" fill="#2f7fae" fill-opacity="0.55"/><polygon points="218.7,98.1 232.0,93.9 232.0,112.0 218.7,115.5" fill="url(#wing)"/><polygon points="218.7,114.3 232.0,110.8 232.0,112.0 218.7,115.5" fill="#2f7fae" fill-opacity="0.55"/><polygon points="238.1,93.1 248.8,93.1 245.6,108.0 236.3,110.1" fill="url(#wing)"/><polygon points="236.3,108.9 245.6,106.8 245.6,108.0 236.3,110.1" fill="#2f7fae" fill-opacity="0.55"/><polygon points="162.0,142.1 164.8,141.3 164.8,148.8 162.0,149.1" fill="url(#wing)"/><polygon points="162.0,147.9 164.8,147.6 164.8,148.8 162.0,149.1" fill="#2f7fae" fill-opacity="0.55"/><polygon points="170.9,138.1 178.7,136.3 178.7,150.7 170.9,152.3" fill="url(#wing)"/><polygon points="170.9,151.1 178.7,149.5 178.7,150.7 170.9,152.3" fill="#2f7fae" fill-opacity="0.55"/><polygon points="183.7,134.7 193.3,132.0 193.3,148.8 183.7,150.7" fill="url(#wing)"/><polygon points="183.7,149.5 193.3,147.6 193.3,148.8 183.7,150.7" fill="#2f7fae" fill-opacity="0.55"/><polygon points="198.7,130.1 209.3,126.9 209.3,144.8 198.7,146.9" fill="url(#wing)"/><polygon points="198.7,145.7 209.3,143.6 209.3,144.8 198.7,146.9" fill="#2f7fae" fill-opacity="0.55"/><polygon points="215.3,124.8 227.3,121.1 227.3,140.0 215.3,142.9" fill="url(#wing)"/><polygon points="215.3,141.7 227.3,138.8 227.3,140.0 215.3,142.9" fill="#2f7fae" fill-opacity="0.55"/><polygon points="234.0,118.7 244.3,116.0 242.1,135.5 232.7,138.1" fill="url(#wing)"/><polygon points="232.7,136.9 242.1,134.3 242.1,135.5 232.7,138.1" fill="#2f7fae" fill-opacity="0.55"/><polygon points="198.0,160.3 207.7,158.9 207.7,166.7 198.0,166.7" fill="url(#wing)"/><polygon points="198.0,165.5 207.7,165.5 207.7,166.7 198.0,166.7" fill="#2f7fae" fill-opacity="0.55"/><polygon points="211.3,158.1 223.3,155.5 223.3,170.7 212.7,172.8" fill="url(#wing)"/><polygon points="212.7,171.6 223.3,169.5 223.3,170.7 212.7,172.8" fill="#2f7fae" fill-opacity="0.55"/><polygon points="229.3,153.3 240.3,150.7 238.7,168.8 228.7,170.7" fill="url(#wing)"/><polygon points="228.7,169.5 238.7,167.6 238.7,168.8 228.7,170.7" fill="#2f7fae" fill-opacity="0.55"/><polygon points="264.7,93.9 274.9,93.1 274.9,97.3 264.0,98.7" fill="url(#wing)"/><polygon points="264.0,97.5 274.9,96.1 274.9,97.3 264.0,98.7" fill="#2f7fae" fill-opacity="0.55"/><polygon points="260.7,108.8 272.0,106.1 270.0,128.8 258.7,131.5" fill="url(#wing)"/><polygon points="258.7,130.3 270.0,127.6 270.0,128.8 258.7,131.5" fill="#2f7fae" fill-opacity="0.55"/><polygon points="278.7,105.3 284.0,104.3 284.0,125.6 277.3,126.9" fill="url(#wing)"/><polygon points="277.3,125.7 284.0,124.4 284.0,125.6 277.3,126.9" fill="#2f7fae" fill-opacity="0.55"/><polygon points="254.4,148.0 265.3,145.3 263.3,164.8 252.7,166.7" fill="url(#wing)"/><polygon points="252.7,165.5 263.3,163.6 263.3,164.8 252.7,166.7" fill="#2f7fae" fill-opacity="0.55"/><polygon points="271.3,143.5 284.0,141.3 284.0,161.9 270.0,164.0" fill="url(#wing)"/><polygon points="270.0,162.8 284.0,160.7 284.0,161.9 270.0,164.0" fill="#2f7fae" fill-opacity="0.55"/><polygon points="250.9,90.7 263.3,90.7 246.7,188.0 233.3,193.3" fill="#f3f4f8" fill-opacity="1"/><polygon points="263.3,90.7 266.7,90.7 249.3,188.0 246.7,188.0" fill="#dcdfe8" fill-opacity="1"/><polygon points="245.3,197.3 286.7,194.7 286.7,220.0 245.3,220.0" fill="#2a484c" fill-opacity="1"/><polygon points="257.3,196.7 260.7,196.4 259.1,220.0 255.7,220.0" fill="#9ab0b0" fill-opacity="1"/><polygon points="273.3,195.5 276.7,195.2 275.3,220.0 272.0,220.0" fill="#88a0a0" fill-opacity="1"/></g><g filter="url(#b2)"><polygon points="-5.3,148.0 16.0,145.3 40.0,154.7 58.7,161.3 62.7,177.3 44.0,198.7 26.7,229.3 -5.3,229.3" fill="#5f7c46" fill-opacity="1"/><polygon points="-5.3,166.7 18.7,161.3 44.0,172.0 37.3,193.3 10.7,198.7 -5.3,193.3" fill="#839c5c" fill-opacity="1"/><polygon points="-5.3,201.3 13.3,198.7 34.7,209.3 24.0,229.3 -5.3,229.3" fill="#3f5c3a" fill-opacity="1"/><polygon points="2.7,212.0 16.0,209.3 20.0,226.7 2.7,226.7" fill="#2e4430" fill-opacity="1"/><polygon points="37.3,156.0 61.3,164.0 62.7,177.3 50.7,174.7 40.0,166.7" fill="#c0a290" fill-opacity="0.8"/><polygon points="-5.3,145.3 12.0,146.0 18.7,153.3 -5.3,154.7" fill="#a89aa0" fill-opacity="0.7"/></g><clipPath id="tclip"><polygon points="-5.3,150.7 16.0,148.0 40.0,157.3 57.3,164.0 60.0,177.3 42.7,198.7 26.7,226.7 -5.3,226.7"/></clipPath><g clip-path="url(#tclip)"><rect x="-6" y="146" width="76" height="84" filter="url(#tree)" opacity="0.95"/><rect x="-6" y="146" width="76" height="84" filter="url(#tree2)" opacity="0.65"/></g><g filter="url(#b1)"><rect x="-6" y="226.6" width="296" height="14" fill="#e7e8ec"/><rect x="232" y="206" width="56" height="34" fill="#eeeff3"/><rect x="244" y="197.4" width="44" height="22.6" fill="#2a484c"/><rect x="256.6" y="197" width="3" height="23" fill="#93a9aa"/><rect x="272.6" y="196" width="3" height="24" fill="#88a0a2"/><rect x="-6" y="237.6" width="296" height="200" fill="url(#floorL)"/><rect x="236" y="237.6" width="54" height="100" fill="#b2b4c2"/><path d="M107 368 C112 392 124 414 138 436 L292 436 L292 327 L240 314 C222 352 170 380 107 368 Z" fill="url(#shad)"/></g><ellipse cx="176" cy="371" rx="62" ry="9" fill="#222c4c" opacity="0.5" filter="url(#b4)"/><circle cx="140.6" cy="260.0" r="113" fill="url(#sph)"/><g clip-path="url(#sclip)"><g filter="url(#b3)"><ellipse cx="142" cy="166" rx="70" ry="20" fill="#a4c2e4" opacity="0.85"/><ellipse cx="166" cy="205" rx="9" ry="18" fill="#6597d2" opacity="0.85"/><ellipse cx="144" cy="219" rx="7" ry="12" fill="#6a9ad2" opacity="0.8"/><ellipse cx="209" cy="196" rx="20" ry="23" fill="#7ca8d8" opacity="0.8"/><ellipse cx="109" cy="178" rx="7" ry="15" fill="#7ea8d8" opacity="0.8"/><ellipse cx="72" cy="218" rx="10" ry="6" fill="#8ab0dc" opacity="0.7"/><ellipse cx="186" cy="170" rx="20" ry="12" fill="#90b4de" opacity="0.7"/><ellipse cx="122" cy="305" rx="7" ry="7" fill="#7c9ccc" opacity="0.6"/><ellipse cx="190" cy="300" rx="5" ry="9" fill="#7c9ccc" opacity="0.5"/><path d="M34 305 C44 352 92 380 138 376 C130 366 120 352 110 346 C80 340 52 326 34 305 Z" fill="#36609e" opacity="0.98"/><path d="M150 376 C200 372 240 340 250 292 C236 318 222 326 206 330 C196 350 170 362 150 376 Z" fill="#3e68a6" opacity="0.95"/><path fill-rule="evenodd" d="M27.6 260 a113 113 0 1 0 226 0 a113 113 0 1 0 -226 0 Z M20.6 228 a120 120 0 1 0 240 0 a120 120 0 1 0 -240 0 Z" fill="#3f69a6" opacity="0.62"/><ellipse cx="206" cy="336" rx="20" ry="14" fill="#4a74ae" opacity="0.8"/><ellipse cx="84" cy="338" rx="22" ry="10" fill="#3e68a4" opacity="0.8"/></g><rect x="26" y="145" width="230" height="232" filter="url(#wstreak)"/><rect x="26" y="145" width="230" height="232" filter="url(#bstreak)" opacity="0.55"/><circle cx="140.6" cy="260.0" r="113" fill="url(#sphshade)"/></g><circle cx="11.2" cy="104.2" r="8.6" fill="#3a3a3a" stroke="#262626" stroke-width="1"/><path d="M7 100.8 H15.4 M7 104.2 H15.4 M7 107.6 H15.4" stroke="#d8d8d8" stroke-width="1.1"/><rect x="26.2" y="95.8" width="63.4" height="17" rx="8.5" fill="#3c3e42" stroke="#24262a" stroke-width="1"/><rect x="96.0" y="95.8" width="36.4" height="17" rx="8.5" fill="#3c3e42" stroke="#24262a" stroke-width="1"/><rect x="139.0" y="95.8" width="35.0" height="17" rx="8.5" fill="#3c3e42" stroke="#24262a" stroke-width="1"/><circle cx="107.6" cy="104.2" r="4.6" fill="#9a9a9a"/><circle cx="108.8" cy="103" r="2.8" fill="#c4c4c4"/><path d="M20.4 406 V387" stroke="#2a2ae8" stroke-width="1.5"/><path d="M20.4 405.2 H6" stroke="#22cc44" stroke-width="1.5"/><path d="M2.6 405.2 L8 402.4 L8 408 Z" fill="#22cc44"/><circle cx="20.6" cy="407.6" r="1.4" fill="#e83030"/><circle cx="219.4" cy="420.4" r="6.1" fill="#cfcfcf" stroke="#4a4a5a" stroke-width="0.9"/><circle cx="233.1" cy="420.4" r="6.1" fill="#a89878" stroke="#4a4a5a" stroke-width="0.9"/><circle cx="246.8" cy="420.4" r="6.1" fill="#e4e4e4" stroke="#4a4a5a" stroke-width="0.9"/><circle cx="260.5" cy="420.4" r="6.1" fill="#a8a8a8" stroke="#4a4a5a" stroke-width="0.9"/><circle cx="274.2" cy="420.4" r="6.1" fill="#e8e8e8" stroke="#4a4a5a" stroke-width="0.9"/><rect x="216.4" y="416" width="6" height="9" fill="#9a9a9a"/><ellipse cx="246.8" cy="421" rx="4.2" ry="2.6" fill="#c8c8c8" stroke="#999" stroke-width="0.5"/><rect x="257.2" y="416.6" width="6.6" height="7.4" fill="#8c8c8c"/><rect x="270.8" y="417.4" width="6.6" height="5.4" fill="#555"/><rect x="272" y="416.2" width="4.6" height="2.4" fill="#f4f4f4"/></g></svg>
<svg class="b" style="left:0;top:0" width="1440" height="810" viewBox="0 0 1440 810"><defs><pattern id="grid" patternUnits="userSpaceOnUse" x="300.95" y="187.45" width="77.300" height="77.300"><rect x="9.062" y="0" width="1.20" height="77.300" fill="#393939"/><rect x="0" y="9.062" width="77.300" height="1.20" fill="#393939"/><rect x="18.725" y="0" width="1.20" height="77.300" fill="#393939"/><rect x="0" y="18.725" width="77.300" height="1.20" fill="#393939"/><rect x="28.387" y="0" width="1.20" height="77.300" fill="#393939"/><rect x="0" y="28.387" width="77.300" height="1.20" fill="#393939"/><rect x="38.050" y="0" width="1.20" height="77.300" fill="#393939"/><rect x="0" y="38.050" width="77.300" height="1.20" fill="#393939"/><rect x="47.712" y="0" width="1.20" height="77.300" fill="#393939"/><rect x="0" y="47.712" width="77.300" height="1.20" fill="#393939"/><rect x="57.375" y="0" width="1.20" height="77.300" fill="#393939"/><rect x="0" y="57.375" width="77.300" height="1.20" fill="#393939"/><rect x="67.038" y="0" width="1.20" height="77.300" fill="#393939"/><rect x="0" y="67.038" width="77.300" height="1.20" fill="#393939"/><rect x="0" y="0" width="0.70" height="77.300" fill="#040404"/><rect x="76.600" y="0" width="0.70" height="77.300" fill="#040404"/><rect x="0" y="0" width="77.300" height="0.70" fill="#040404"/><rect x="0" y="76.600" width="77.300" height="0.70" fill="#040404"/></pattern><pattern id="gridc" patternUnits="userSpaceOnUse" x="300.95" y="187.45" width="77.300" height="77.300"><rect x="9.112" y="0" width="1.10" height="77.300" fill="rgba(255,255,255,0.13)"/><rect x="0" y="9.112" width="77.300" height="1.10" fill="rgba(255,255,255,0.13)"/><rect x="18.775" y="0" width="1.10" height="77.300" fill="rgba(255,255,255,0.13)"/><rect x="0" y="18.775" width="77.300" height="1.10" fill="rgba(255,255,255,0.13)"/><rect x="28.437" y="0" width="1.10" height="77.300" fill="rgba(255,255,255,0.13)"/><rect x="0" y="28.437" width="77.300" height="1.10" fill="rgba(255,255,255,0.13)"/><rect x="38.100" y="0" width="1.10" height="77.300" fill="rgba(255,255,255,0.13)"/><rect x="0" y="38.100" width="77.300" height="1.10" fill="rgba(255,255,255,0.13)"/><rect x="47.763" y="0" width="1.10" height="77.300" fill="rgba(255,255,255,0.13)"/><rect x="0" y="47.763" width="77.300" height="1.10" fill="rgba(255,255,255,0.13)"/><rect x="57.425" y="0" width="1.10" height="77.300" fill="rgba(255,255,255,0.13)"/><rect x="0" y="57.425" width="77.300" height="1.10" fill="rgba(255,255,255,0.13)"/><rect x="67.088" y="0" width="1.10" height="77.300" fill="rgba(255,255,255,0.13)"/><rect x="0" y="67.088" width="77.300" height="1.10" fill="rgba(255,255,255,0.13)"/><rect x="0" y="0" width="0.75" height="77.300" fill="rgba(0,0,0,0.22)"/><rect x="76.550" y="0" width="0.75" height="77.300" fill="rgba(0,0,0,0.22)"/><rect x="0" y="0" width="77.300" height="0.75" fill="rgba(0,0,0,0.22)"/><rect x="0" y="76.550" width="77.300" height="0.75" fill="rgba(0,0,0,0.22)"/></pattern><linearGradient id="g_green" x1="0" y1="0" x2="1" y2="0"><stop offset="0" stop-color="#5fa524"/><stop offset="0.4" stop-color="#5fa524"/><stop offset="1" stop-color="#1f3d0f"/></linearGradient><linearGradient id="g_ygreen" x1="0" y1="0" x2="1" y2="0"><stop offset="0" stop-color="#8c9c16"/><stop offset="0.4" stop-color="#8c9c16"/><stop offset="1" stop-color="#384208"/></linearGradient><linearGradient id="g_dgreen" x1="0" y1="0" x2="1" y2="0"><stop offset="0" stop-color="#4e8040"/><stop offset="0.4" stop-color="#4e8040"/><stop offset="1" stop-color="#1a2a16"/></linearGradient><linearGradient id="g_red" x1="0" y1="0" x2="1" y2="0"><stop offset="0" stop-color="#a31216"/><stop offset="0.4" stop-color="#a31216"/><stop offset="1" stop-color="#42080a"/></linearGradient><linearGradient id="g_blue" x1="0" y1="0" x2="1" y2="0"><stop offset="0" stop-color="#1f6fa4"/><stop offset="0.4" stop-color="#1f6fa4"/><stop offset="1" stop-color="#0e2e46"/></linearGradient><linearGradient id="g_bgray" x1="0" y1="0" x2="1" y2="0"><stop offset="0" stop-color="#3b6c9c"/><stop offset="0.4" stop-color="#3b6c9c"/><stop offset="1" stop-color="#1a2e40"/></linearGradient><linearGradient id="g_teal" x1="0" y1="0" x2="1" y2="0"><stop offset="0" stop-color="#179c9a"/><stop offset="0.4" stop-color="#179c9a"/><stop offset="1" stop-color="#094040"/></linearGradient><linearGradient id="g_tealg" x1="0" y1="0" x2="1" y2="0"><stop offset="0" stop-color="#17a07c"/><stop offset="0.4" stop-color="#17a07c"/><stop offset="1" stop-color="#094234"/></linearGradient><linearGradient id="g_purple" x1="0" y1="0" x2="1" y2="0"><stop offset="0" stop-color="#6c18ac"/><stop offset="0.4" stop-color="#6c18ac"/><stop offset="1" stop-color="#2e0a4a"/></linearGradient><linearGradient id="g_magenta" x1="0" y1="0" x2="1" y2="0"><stop offset="0" stop-color="#a81284"/><stop offset="0.4" stop-color="#a81284"/><stop offset="1" stop-color="#480838"/></linearGradient><linearGradient id="g_orange" x1="0" y1="0" x2="1" y2="0"><stop offset="0" stop-color="#b04e14"/><stop offset="0.4" stop-color="#b04e14"/><stop offset="1" stop-color="#4a2208"/></linearGradient><linearGradient id="g_gold" x1="0" y1="0" x2="1" y2="0"><stop offset="0" stop-color="#ac8412"/><stop offset="0.4" stop-color="#ac8412"/><stop offset="1" stop-color="#4a3a08"/></linearGradient><linearGradient id="g_yellow" x1="0" y1="0" x2="1" y2="0"><stop offset="0" stop-color="#a29a14"/><stop offset="0.4" stop-color="#a29a14"/><stop offset="1" stop-color="#444008"/></linearGradient><linearGradient id="g_dblue" x1="0" y1="0" x2="1" y2="0"><stop offset="0" stop-color="#1818ac"/><stop offset="0.4" stop-color="#1818ac"/><stop offset="1" stop-color="#0a0a4a"/></linearGradient><linearGradient id="g_crimson" x1="0" y1="0" x2="1" y2="0"><stop offset="0" stop-color="#a81250"/><stop offset="0.4" stop-color="#a81250"/><stop offset="1" stop-color="#480824"/></linearGradient><linearGradient id="g_tan" x1="0" y1="0" x2="1" y2="0"><stop offset="0" stop-color="#a88662"/><stop offset="0.4" stop-color="#a88662"/><stop offset="1" stop-color="#4a3c2c"/></linearGradient><linearGradient id="gloss" x1="0" y1="0" x2="0" y2="1"><stop offset="0" stop-color="#fff" stop-opacity="0.05"/><stop offset="0.45" stop-color="#fff" stop-opacity="0.16"/><stop offset="0.55" stop-color="#000" stop-opacity="0.10"/><stop offset="1" stop-color="#000" stop-opacity="0.38"/></linearGradient><clipPath id="gclip"><rect x="286.2" y="93.0" width="1135.6" height="675.6"/></clipPath><filter id="fnoise" x="0" y="0" width="1" height="1"><feTurbulence type="fractalNoise" baseFrequency="0.22" numOctaves="2" seed="3"/><feColorMatrix type="matrix" values="0 0 0 0 0  0 0 0 0 0  0 0 0 0 0  5 0 0 0 -2.6"/></filter><pattern id="noisep" patternUnits="userSpaceOnUse" x="455" y="641" width="16" height="16"><rect width="16" height="16" filter="url(#fnoise)"/></pattern><pattern id="pinkp" patternUnits="userSpaceOnUse" x="900.4" y="275.4" width="16" height="15"><rect width="16" height="15" fill="#b4cdf0"/><rect x="0" y="9" width="3" height="6" fill="#e8f0d8"/><path d="M5 15 L6 6 L7.5 1 L9 6 L10.5 15 Z" fill="#dc1c40"/><path d="M4 11 L6.5 7 L7 12 Z M9 5 L12 2 L11 8 Z" fill="#e8285a"/><path d="M10 9 L14 6 L14.5 12 L11 14 Z" fill="#f48cc0"/><path d="M2 3 L5 5 L3.5 8 Z" fill="#f0a8c8"/><path d="M12.5 1 L15 3 M1 1 L3 2" stroke="#fff" stroke-width="1.2"/></pattern><filter id="tb" x="0" y="0" width="1" height="1"><feGaussianBlur stdDeviation="0.5"/></filter><linearGradient id="topfade" x1="0" y1="0" x2="0" y2="1"><stop offset="0" stop-color="#0c0c0c" stop-opacity="0.86"/><stop offset="0.86" stop-color="#0c0c0c" stop-opacity="0.80"/><stop offset="1" stop-color="#0c0c0c" stop-opacity="0"/></linearGradient><linearGradient id="lsh" x1="0" y1="0" x2="1" y2="0"><stop offset="0" stop-color="#000" stop-opacity="0.5"/><stop offset="1" stop-color="#000" stop-opacity="0"/></linearGradient><linearGradient id="rsh" x1="1" y1="0" x2="0" y2="0"><stop offset="0" stop-color="#000" stop-opacity="0.4"/><stop offset="1" stop-color="#000" stop-opacity="0"/></linearGradient><linearGradient id="bsh" x1="0" y1="1" x2="0" y2="0"><stop offset="0" stop-color="#000" stop-opacity="0.4"/><stop offset="1" stop-color="#000" stop-opacity="0"/></linearGradient></defs><g clip-path="url(#gclip)"><rect x="286.2" y="93.0" width="1135.6" height="675.6" fill="#232323"/><rect x="286.2" y="93.0" width="1135.6" height="675.6" fill="url(#grid)"/><rect x="375.7" y="196.7" width="67.6" height="43.1" fill="none" stroke="#000" stroke-opacity="0.45" stroke-width="1"/><rect x="376.2" y="197.2" width="66.6" height="42.1" fill="#a2a2a2" fill-opacity="0.80"/><rect x="376.2" y="197.2" width="66.6" height="42.1" fill="url(#gridc)"/><rect x="376.6" y="197.6" width="65.8" height="41.3" fill="none" stroke="#b0b0b0" stroke-opacity="0.55" stroke-width="0.8"/><rect x="376.5" y="197.2" width="66.0" height="5.9" fill="#cdcdcd"/><text x="379.1" y="202.3" font-family="Liberation Sans,sans-serif" font-size="4.5" font-weight="700" fill="#777777" opacity="0.99">Mask Tiling</text><text x="378.6" y="201.9" font-family="Liberation Sans,sans-serif" font-size="4.5" font-weight="700" fill="#fafafa" opacity="0.86">Mask Tiling</text><path d="M442.0 238.5 l-2.4 0 l2.4 -2.4 z" fill="#e8e8e8"/><rect x="496.5" y="148.7" width="80.3" height="121.6" fill="none" stroke="#000" stroke-opacity="0.45" stroke-width="1"/><rect x="497.0" y="149.2" width="79.3" height="120.6" fill="#a2a2a2" fill-opacity="0.80"/><rect x="497.0" y="149.2" width="79.3" height="120.6" fill="url(#gridc)"/><rect x="497.4" y="149.6" width="78.5" height="119.8" fill="none" stroke="#b0b0b0" stroke-opacity="0.55" stroke-width="0.8"/><rect x="497.3" y="149.2" width="78.7" height="5.9" fill="#cdcdcd"/><text x="499.9" y="154.3" font-family="Liberation Sans,sans-serif" font-size="4.5" font-weight="700" fill="#777777" opacity="0.99">Layer 01</text><text x="499.4" y="153.9" font-family="Liberation Sans,sans-serif" font-size="4.5" font-weight="700" fill="#fafafa" opacity="0.86">Layer 01</text><path d="M575.5 269.0 l-2.4 0 l2.4 -2.4 z" fill="#e8e8e8"/><rect x="619.5" y="146.1" width="83.0" height="70.3" fill="none" stroke="#000" stroke-opacity="0.45" stroke-width="1"/><rect x="620.0" y="146.6" width="82.0" height="69.3" fill="#a2a2a2" fill-opacity="0.80"/><rect x="620.0" y="146.6" width="82.0" height="69.3" fill="url(#gridc)"/><rect x="620.4" y="147.0" width="81.2" height="68.5" fill="none" stroke="#b0b0b0" stroke-opacity="0.55" stroke-width="0.8"/><rect x="620.3" y="146.6" width="81.4" height="5.9" fill="#cdcdcd"/><text x="622.9" y="151.7" font-family="Liberation Sans,sans-serif" font-size="4.5" font-weight="700" fill="#777777" opacity="0.99">Combine</text><text x="622.4" y="151.3" font-family="Liberation Sans,sans-serif" font-size="4.5" font-weight="700" fill="#fafafa" opacity="0.86">Combine</text><path d="M701.2 215.1 l-2.4 0 l2.4 -2.4 z" fill="#e8e8e8"/><rect x="615.7" y="222.8" width="84.8" height="72.5" fill="none" stroke="#000" stroke-opacity="0.45" stroke-width="1"/><rect x="616.2" y="223.3" width="83.8" height="71.5" fill="#a2a2a2" fill-opacity="0.80"/><rect x="616.2" y="223.3" width="83.8" height="71.5" fill="url(#gridc)"/><rect x="616.6" y="223.7" width="83.0" height="70.7" fill="none" stroke="#b0b0b0" stroke-opacity="0.55" stroke-width="0.8"/><rect x="616.5" y="223.3" width="83.2" height="5.9" fill="#cdcdcd"/><text x="619.1" y="228.4" font-family="Liberation Sans,sans-serif" font-size="4.5" font-weight="700" fill="#777777" opacity="0.99">Layer 02</text><text x="618.6" y="228.0" font-family="Liberation Sans,sans-serif" font-size="4.5" font-weight="700" fill="#fafafa" opacity="0.86">Layer 02</text><path d="M699.2 294.0 l-2.4 0 l2.4 -2.4 z" fill="#e8e8e8"/><rect x="624.1" y="305.3" width="82.6" height="46.0" fill="none" stroke="#000" stroke-opacity="0.45" stroke-width="1"/><rect x="624.6" y="305.8" width="81.6" height="45.0" fill="#a2a2a2" fill-opacity="0.80"/><rect x="624.6" y="305.8" width="81.6" height="45.0" fill="url(#gridc)"/><rect x="625.0" y="306.2" width="80.8" height="44.2" fill="none" stroke="#b0b0b0" stroke-opacity="0.55" stroke-width="0.8"/><rect x="624.9" y="305.8" width="81.0" height="5.9" fill="#cdcdcd"/><text x="627.5" y="310.9" font-family="Liberation Sans,sans-serif" font-size="4.5" font-weight="700" fill="#777777" opacity="0.99">Opacity Blend Mask</text><text x="627.0" y="310.5" font-family="Liberation Sans,sans-serif" font-size="4.5" font-weight="700" fill="#fafafa" opacity="0.86">Opacity Blend Mask</text><path d="M705.4 350.0 l-2.4 0 l2.4 -2.4 z" fill="#e8e8e8"/><rect x="832.1" y="249.9" width="201.7" height="80.6" fill="none" stroke="#000" stroke-opacity="0.45" stroke-width="1"/><rect x="832.6" y="250.4" width="200.7" height="79.6" fill="#a2a2a2" fill-opacity="0.80"/><rect x="832.6" y="250.4" width="200.7" height="79.6" fill="url(#gridc)"/><rect x="833.0" y="250.8" width="199.9" height="78.8" fill="none" stroke="#b0b0b0" stroke-opacity="0.55" stroke-width="0.8"/><rect x="832.9" y="250.4" width="200.1" height="5.9" fill="#cdcdcd"/><text x="835.5" y="255.5" font-family="Liberation Sans,sans-serif" font-size="4.5" font-weight="700" fill="#777777" opacity="0.99">Blend Mask Color Output</text><text x="835.0" y="255.1" font-family="Liberation Sans,sans-serif" font-size="4.5" font-weight="700" fill="#fafafa" opacity="0.86">Blend Mask Color Output</text><path d="M1032.5 329.2 l-2.4 0 l2.4 -2.4 z" fill="#e8e8e8"/><rect x="1059.5" y="257.5" width="109.2" height="38.8" fill="none" stroke="#000" stroke-opacity="0.45" stroke-width="1"/><rect x="1060.0" y="258.0" width="108.2" height="37.8" fill="#a2a2a2" fill-opacity="0.80"/><rect x="1060.0" y="258.0" width="108.2" height="37.8" fill="url(#gridc)"/><rect x="1060.4" y="258.4" width="107.4" height="37.0" fill="none" stroke="#b0b0b0" stroke-opacity="0.55" stroke-width="0.8"/><rect x="1060.3" y="258.0" width="107.6" height="5.9" fill="#cdcdcd"/><text x="1062.9" y="263.1" font-family="Liberation Sans,sans-serif" font-size="4.5" font-weight="700" fill="#777777" opacity="0.99">Tint</text><text x="1062.4" y="262.7" font-family="Liberation Sans,sans-serif" font-size="4.5" font-weight="700" fill="#fafafa" opacity="0.86">Tint</text><path d="M1167.4 295.0 l-2.4 0 l2.4 -2.4 z" fill="#e8e8e8"/><rect x="375.7" y="336.9" width="67.6" height="43.2" fill="none" stroke="#000" stroke-opacity="0.45" stroke-width="1"/><rect x="376.2" y="337.4" width="66.6" height="42.2" fill="#a2a2a2" fill-opacity="0.80"/><rect x="376.2" y="337.4" width="66.6" height="42.2" fill="url(#gridc)"/><rect x="376.6" y="337.8" width="65.8" height="41.4" fill="none" stroke="#b0b0b0" stroke-opacity="0.55" stroke-width="0.8"/><rect x="376.5" y="337.4" width="66.0" height="5.9" fill="#cdcdcd"/><text x="379.1" y="342.5" font-family="Liberation Sans,sans-serif" font-size="4.5" font-weight="700" fill="#777777" opacity="0.99">Mask Tiling</text><text x="378.6" y="342.1" font-family="Liberation Sans,sans-serif" font-size="4.5" font-weight="700" fill="#fafafa" opacity="0.86">Mask Tiling</text><path d="M442.0 378.8 l-2.4 0 l2.4 -2.4 z" fill="#e8e8e8"/><rect x="496.5" y="288.7" width="80.3" height="121.6" fill="none" stroke="#000" stroke-opacity="0.45" stroke-width="1"/><rect x="497.0" y="289.2" width="79.3" height="120.6" fill="#a2a2a2" fill-opacity="0.80"/><rect x="497.0" y="289.2" width="79.3" height="120.6" fill="url(#gridc)"/><rect x="497.4" y="289.6" width="78.5" height="119.8" fill="none" stroke="#b0b0b0" stroke-opacity="0.55" stroke-width="0.8"/><rect x="497.3" y="289.2" width="78.7" height="5.9" fill="#cdcdcd"/><text x="499.9" y="294.3" font-family="Liberation Sans,sans-serif" font-size="4.5" font-weight="700" fill="#777777" opacity="0.99">Layer 02</text><text x="499.4" y="293.9" font-family="Liberation Sans,sans-serif" font-size="4.5" font-weight="700" fill="#fafafa" opacity="0.86">Layer 02</text><path d="M575.5 409.0 l-2.4 0 l2.4 -2.4 z" fill="#e8e8e8"/><rect x="423.9" y="424.1" width="143.4" height="121.2" fill="none" stroke="#000" stroke-opacity="0.45" stroke-width="1"/><rect x="424.4" y="424.6" width="142.4" height="120.2" fill="#a2a2a2" fill-opacity="0.80"/><rect x="424.4" y="424.6" width="142.4" height="120.2" fill="url(#gridc)"/><rect x="424.8" y="425.0" width="141.6" height="119.4" fill="none" stroke="#b0b0b0" stroke-opacity="0.55" stroke-width="0.8"/><rect x="424.7" y="424.6" width="141.8" height="5.9" fill="#cdcdcd"/><text x="427.3" y="429.7" font-family="Liberation Sans,sans-serif" font-size="4.5" font-weight="700" fill="#777777" opacity="0.99">Dirt Mask Input</text><text x="426.8" y="429.3" font-family="Liberation Sans,sans-serif" font-size="4.5" font-weight="700" fill="#fafafa" opacity="0.86">Dirt Mask Input</text><path d="M566.0 544.0 l-2.4 0 l2.4 -2.4 z" fill="#e8e8e8"/><rect x="360.7" y="563.1" width="174.4" height="126.6" fill="none" stroke="#000" stroke-opacity="0.45" stroke-width="1"/><rect x="361.2" y="563.6" width="173.4" height="125.6" fill="#a2a2a2" fill-opacity="0.80"/><rect x="361.2" y="563.6" width="173.4" height="125.6" fill="url(#gridc)"/><rect x="361.6" y="564.0" width="172.6" height="124.8" fill="none" stroke="#b0b0b0" stroke-opacity="0.55" stroke-width="0.8"/><rect x="361.5" y="563.6" width="172.8" height="5.9" fill="#cdcdcd"/><text x="364.1" y="568.7" font-family="Liberation Sans,sans-serif" font-size="4.5" font-weight="700" fill="#777777" opacity="0.99">Damage</text><text x="363.6" y="568.3" font-family="Liberation Sans,sans-serif" font-size="4.5" font-weight="700" fill="#fafafa" opacity="0.86">Damage</text><path d="M533.8 688.4 l-2.4 0 l2.4 -2.4 z" fill="#e8e8e8"/><rect x="624.5" y="364.1" width="177.2" height="91.4" fill="none" stroke="#000" stroke-opacity="0.45" stroke-width="1"/><rect x="625.0" y="364.6" width="176.2" height="90.4" fill="#a2a2a2" fill-opacity="0.80"/><rect x="625.0" y="364.6" width="176.2" height="90.4" fill="url(#gridc)"/><rect x="625.4" y="365.0" width="175.4" height="89.6" fill="none" stroke="#b0b0b0" stroke-opacity="0.55" stroke-width="0.8"/><rect x="625.3" y="364.6" width="175.6" height="5.9" fill="#cdcdcd"/><text x="627.9" y="369.7" font-family="Liberation Sans,sans-serif" font-size="4.5" font-weight="700" fill="#777777" opacity="0.99">Wall Painted Layer 1/4</text><text x="627.4" y="369.3" font-family="Liberation Sans,sans-serif" font-size="4.5" font-weight="700" fill="#fafafa" opacity="0.86">Wall Painted Layer 1/4</text><path d="M800.4 454.2 l-2.4 0 l2.4 -2.4 z" fill="#e8e8e8"/><rect x="624.5" y="460.7" width="177.2" height="91.6" fill="none" stroke="#000" stroke-opacity="0.45" stroke-width="1"/><rect x="625.0" y="461.2" width="176.2" height="90.6" fill="#a2a2a2" fill-opacity="0.80"/><rect x="625.0" y="461.2" width="176.2" height="90.6" fill="url(#gridc)"/><rect x="625.4" y="461.6" width="175.4" height="89.8" fill="none" stroke="#b0b0b0" stroke-opacity="0.55" stroke-width="0.8"/><rect x="625.3" y="461.2" width="175.6" height="5.9" fill="#cdcdcd"/><text x="627.9" y="466.3" font-family="Liberation Sans,sans-serif" font-size="4.5" font-weight="700" fill="#777777" opacity="0.99">Wall Paint Layer 2/4</text><text x="627.4" y="465.9" font-family="Liberation Sans,sans-serif" font-size="4.5" font-weight="700" fill="#fafafa" opacity="0.86">Wall Paint Layer 2/4</text><path d="M800.4 551.0 l-2.4 0 l2.4 -2.4 z" fill="#e8e8e8"/><rect x="624.5" y="556.9" width="177.2" height="91.8" fill="none" stroke="#000" stroke-opacity="0.45" stroke-width="1"/><rect x="625.0" y="557.4" width="176.2" height="90.8" fill="#a2a2a2" fill-opacity="0.80"/><rect x="625.0" y="557.4" width="176.2" height="90.8" fill="url(#gridc)"/><rect x="625.4" y="557.8" width="175.4" height="90.0" fill="none" stroke="#b0b0b0" stroke-opacity="0.55" stroke-width="0.8"/><rect x="625.3" y="557.4" width="175.6" height="5.9" fill="#cdcdcd"/><text x="627.9" y="562.5" font-family="Liberation Sans,sans-serif" font-size="4.5" font-weight="700" fill="#777777" opacity="0.99">Wall Damaged Layer 3/4</text><text x="627.4" y="562.1" font-family="Liberation Sans,sans-serif" font-size="4.5" font-weight="700" fill="#fafafa" opacity="0.86">Wall Damaged Layer 3/4</text><path d="M800.4 647.4 l-2.4 0 l2.4 -2.4 z" fill="#e8e8e8"/><rect x="631.7" y="653.1" width="128.4" height="81.2" fill="none" stroke="#000" stroke-opacity="0.45" stroke-width="1"/><rect x="632.2" y="653.6" width="127.4" height="80.2" fill="#a2a2a2" fill-opacity="0.80"/><rect x="632.2" y="653.6" width="127.4" height="80.2" fill="url(#gridc)"/><rect x="632.6" y="654.0" width="126.6" height="79.4" fill="none" stroke="#b0b0b0" stroke-opacity="0.55" stroke-width="0.8"/><rect x="632.5" y="653.6" width="126.8" height="5.9" fill="#cdcdcd"/><text x="635.1" y="658.7" font-family="Liberation Sans,sans-serif" font-size="4.5" font-weight="700" fill="#777777" opacity="0.99">Blend Mask</text><text x="634.6" y="658.3" font-family="Liberation Sans,sans-serif" font-size="4.5" font-weight="700" fill="#fafafa" opacity="0.86">Blend Mask</text><path d="M758.8 733.0 l-2.4 0 l2.4 -2.4 z" fill="#e8e8e8"/><path d="M689.0 169.6 C737.5 169.6 737.5 199.2 786.0 199.2" fill="none" stroke="#676767" stroke-width="1.45" stroke-linecap="round"/><path d="M686.6 240.2 C736.3 240.2 736.3 203.2 786.0 203.2" fill="none" stroke="#676767" stroke-width="1.45" stroke-linecap="round"/><path d="M766.0 222.4 C777.0 222.4 775.0 207.2 786.0 207.2" fill="none" stroke="#676767" stroke-width="1.45" stroke-linecap="round"/><path d="M805.0 199.0 C831.8 199.0 831.8 196.6 858.6 196.6" fill="none" stroke="#676767" stroke-width="1.45" stroke-linecap="round"/><path d="M693.6 323.4 C784.4 323.4 767.9 200.6 858.6 200.6" fill="none" stroke="#676767" stroke-width="1.45" stroke-linecap="round"/><path d="M839.0 222.4 C849.8 222.4 847.8 204.4 858.6 204.4" fill="none" stroke="#676767" stroke-width="1.45" stroke-linecap="round"/><path d="M877.6 196.4 C933.3 196.4 933.3 197.0 989.0 197.0" fill="none" stroke="#676767" stroke-width="1.45" stroke-linecap="round"/><path d="M971.6 218.0 C982.0 218.0 978.6 203.6 989.0 203.6" fill="none" stroke="#676767" stroke-width="1.45" stroke-linecap="round"/><path d="M1025.0 268.6 C1042 268 1036 258 1024 246 C1008 230 972 214 989.0 200.6" fill="none" stroke="#676767" stroke-width="1.45" stroke-linecap="round"/><path d="M1008.0 197.0 C1104.8 197.0 1104.8 199.4 1201.6 199.4" fill="none" stroke="#676767" stroke-width="1.45" stroke-linecap="round"/><path d="M1183.6 216.0 C1194.4 216.0 1190.8 203.6 1201.6 203.6" fill="none" stroke="#676767" stroke-width="1.45" stroke-linecap="round"/><path d="M1155.0 274.6 C1172 274 1176 262 1178 244 C1180 222 1186 208 1201.6 207.4" fill="none" stroke="#676767" stroke-width="1.45" stroke-linecap="round"/><path d="M1220.4 199.2 C1262.0 199.2 1262.0 203.6 1303.6 203.6" fill="none" stroke="#676767" stroke-width="1.45" stroke-linecap="round"/><path d="M442.0 221.6 C473.5 221.6 473.5 168.2 505.0 168.2" fill="none" stroke="#727272" stroke-width="1.40" stroke-linecap="round"/><path d="M442.0 221.6 C473.5 221.6 473.5 203.4 505.0 203.4" fill="none" stroke="#727272" stroke-width="1.40" stroke-linecap="round"/><path d="M442.0 221.6 C473.5 221.6 473.5 239.0 505.0 239.0" fill="none" stroke="#727272" stroke-width="1.40" stroke-linecap="round"/><path d="M442.6 361.0 C474.6 361.0 474.6 308.0 506.6 308.0" fill="none" stroke="#727272" stroke-width="1.40" stroke-linecap="round"/><path d="M442.6 361.0 C474.6 361.0 474.6 344.0 506.6 344.0" fill="none" stroke="#727272" stroke-width="1.40" stroke-linecap="round"/><path d="M442.6 361.0 C474.6 361.0 474.6 380.4 506.6 380.4" fill="none" stroke="#727272" stroke-width="1.40" stroke-linecap="round"/><path d="M404.0 213.6 C411.4 213.6 415.2 221.4 422.6 221.4" fill="none" stroke="#b4b4b4" stroke-width="1.10" stroke-linecap="round"/><path d="M409.0 230.2 C414.4 230.2 417.2 225.0 422.6 225.0" fill="none" stroke="#b4b4b4" stroke-width="1.10" stroke-linecap="round"/><path d="M404.0 353.6 C411.4 353.6 415.2 361.4 422.6 361.4" fill="none" stroke="#b4b4b4" stroke-width="1.10" stroke-linecap="round"/><path d="M409.0 370.2 C414.4 370.2 417.2 365.0 422.6 365.0" fill="none" stroke="#b4b4b4" stroke-width="1.10" stroke-linecap="round"/><path d="M525.6 167.8 C535.8 167.8 535.8 170.4 546.0 170.4" fill="none" stroke="#b4b4b4" stroke-width="1.45" stroke-linecap="round"/><path d="M526.0 204.4 C536.0 204.4 536.0 208.8 546.0 208.8" fill="none" stroke="#b4b4b4" stroke-width="1.45" stroke-linecap="round"/><path d="M526.0 243.6 C537.2 243.6 537.2 242.4 548.4 242.4" fill="none" stroke="#b4b4b4" stroke-width="1.45" stroke-linecap="round"/><path d="M526.0 249.0 C537.2 249.0 537.2 252.0 548.4 252.0" fill="none" stroke="#b4b4b4" stroke-width="1.45" stroke-linecap="round"/><path d="M526.0 252.6 C537.2 252.6 537.2 262.2 548.4 262.2" fill="none" stroke="#b4b4b4" stroke-width="1.45" stroke-linecap="round"/><path d="M527.6 307.6 C540.5 307.6 540.5 310.2 553.4 310.2" fill="none" stroke="#b4b4b4" stroke-width="1.45" stroke-linecap="round"/><path d="M527.6 344.0 C540.5 344.0 540.5 346.6 553.4 346.6" fill="none" stroke="#b4b4b4" stroke-width="1.45" stroke-linecap="round"/><path d="M527.6 384.2 C540.5 384.2 540.5 385.0 553.4 385.0" fill="none" stroke="#b4b4b4" stroke-width="1.45" stroke-linecap="round"/><path d="M527.6 388.6 C539.5 388.6 539.5 394.6 551.4 394.6" fill="none" stroke="#b4b4b4" stroke-width="1.45" stroke-linecap="round"/><path d="M527.6 392.6 C540.5 392.6 540.5 404.6 553.4 404.6" fill="none" stroke="#b4b4b4" stroke-width="1.45" stroke-linecap="round"/><path d="M648.4 162.4 C658.1 162.4 660.3 173.8 670.0 173.8" fill="none" stroke="#b4b4b4" stroke-width="1.00" stroke-linecap="round"/><path d="M648.4 171.8 C658.1 171.8 660.3 177.8 670.0 177.8" fill="none" stroke="#b4b4b4" stroke-width="1.00" stroke-linecap="round"/><path d="M650.4 182.0 C659.2 182.0 661.2 181.8 670.0 181.8" fill="none" stroke="#b4b4b4" stroke-width="1.00" stroke-linecap="round"/><path d="M648.4 189.0 C658.1 189.0 660.3 185.8 670.0 185.8" fill="none" stroke="#b4b4b4" stroke-width="1.00" stroke-linecap="round"/><path d="M648.4 199.0 C658.1 199.0 660.3 189.8 670.0 189.8" fill="none" stroke="#b4b4b4" stroke-width="1.00" stroke-linecap="round"/><path d="M655.6 208.6 C662.1 208.6 663.5 193.8 670.0 193.8" fill="none" stroke="#b4b4b4" stroke-width="1.00" stroke-linecap="round"/><path d="M650.4 240.0 C658.1 240.0 659.9 244.2 667.6 244.2" fill="none" stroke="#b4b4b4" stroke-width="1.00" stroke-linecap="round"/><path d="M650.4 250.0 C658.1 250.0 659.9 248.2 667.6 248.2" fill="none" stroke="#b4b4b4" stroke-width="1.00" stroke-linecap="round"/><path d="M658.0 259.6 C662.3 259.6 663.3 252.2 667.6 252.2" fill="none" stroke="#b4b4b4" stroke-width="1.00" stroke-linecap="round"/><path d="M647.4 268.6 C656.5 268.6 658.5 256.2 667.6 256.2" fill="none" stroke="#b4b4b4" stroke-width="1.00" stroke-linecap="round"/><path d="M652.6 278.6 C659.4 278.6 660.9 260.2 667.6 260.2" fill="none" stroke="#b4b4b4" stroke-width="1.00" stroke-linecap="round"/><path d="M660.4 288.6 C664.4 288.6 663.6 264.2 667.6 264.2" fill="none" stroke="#b4b4b4" stroke-width="1.00" stroke-linecap="round"/><path d="M653.4 322.0 C663.7 322.0 663.7 328.2 674.0 328.2" fill="none" stroke="#b4b4b4" stroke-width="1.45" stroke-linecap="round"/><path d="M654.2 333.4 C664.1 333.4 664.1 332.2 674.0 332.2" fill="none" stroke="#b4b4b4" stroke-width="1.45" stroke-linecap="round"/><path d="M653.0 344.4 C663.5 344.4 663.5 336.0 674.0 336.0" fill="none" stroke="#b4b4b4" stroke-width="1.45" stroke-linecap="round"/><path d="M855.6 269.0 C869.3 269.0 869.3 271.4 883.0 271.4" fill="none" stroke="#b4b4b4" stroke-width="1.45" stroke-linecap="round"/><path d="M858.2 305.2 C865.9 305.2 863.3 289.0 871.0 289.0" fill="none" stroke="#b4b4b4" stroke-width="1.45" stroke-linecap="round"/><path d="M858.2 322.4 C867.2 322.4 862.0 291.6 871.0 291.6" fill="none" stroke="#b4b4b4" stroke-width="1.45" stroke-linecap="round"/><path d="M890.0 287.6 C896.2 287.6 896.2 287.0 902.4 287.0" fill="none" stroke="#b4b4b4" stroke-width="1.45" stroke-linecap="round"/><path d="M902.4 271.4 C906.4 271.4 898.4 271.4 902.4 271.4" fill="none" stroke="#b4b4b4" stroke-width="1.45" stroke-linecap="round"/><path d="M921.6 269.2 C934.8 269.2 934.8 272.0 948.0 272.0" fill="none" stroke="#b4b4b4" stroke-width="1.45" stroke-linecap="round"/><path d="M966.8 272.0 C986.4 272.0 986.4 273.0 1006.0 273.0" fill="none" stroke="#b4b4b4" stroke-width="1.45" stroke-linecap="round"/><path d="M998.6 288.8 C1003.8 288.8 1000.8 277.0 1006.0 277.0" fill="none" stroke="#b4b4b4" stroke-width="1.45" stroke-linecap="round"/><path d="M1087.4 278.8 C1111.7 278.8 1111.7 279.0 1136.0 279.0" fill="none" stroke="#b4b4b4" stroke-width="1.45" stroke-linecap="round"/><path d="M1094.4 289.0 C1115.2 289.0 1115.2 283.0 1136.0 283.0" fill="none" stroke="#b4b4b4" stroke-width="1.45" stroke-linecap="round"/><path d="M490.4 441.0 C506.1 441.0 506.1 448.6 521.8 448.6" fill="none" stroke="#b4b4b4" stroke-width="1.45" stroke-linecap="round"/><path d="M489.0 479.4 C504.4 479.4 504.4 482.4 519.8 482.4" fill="none" stroke="#b4b4b4" stroke-width="1.45" stroke-linecap="round"/><path d="M482.0 499.2 C488.0 499.2 491.0 507.0 497.0 507.0" fill="none" stroke="#b4b4b4" stroke-width="1.45" stroke-linecap="round"/><path d="M516.2 506.2 C523.3 506.2 526.9 513.2 534.0 513.2" fill="none" stroke="#b4b4b4" stroke-width="1.45" stroke-linecap="round"/><path d="M489.2 523.0 C494.7 523.0 491.5 510.0 497.0 510.0" fill="none" stroke="#b4b4b4" stroke-width="1.45" stroke-linecap="round"/><path d="M452.6 520.8 C459.3 520.8 462.7 523.6 469.4 523.6" fill="none" stroke="#b4b4b4" stroke-width="1.45" stroke-linecap="round"/><path d="M452.6 520.8 C459.3 520.8 462.7 527.0 469.4 527.0" fill="none" stroke="#b4b4b4" stroke-width="1.45" stroke-linecap="round"/><path d="M479.6 580.0 C493.7 580.0 493.7 587.4 507.8 587.4" fill="none" stroke="#b4b4b4" stroke-width="1.45" stroke-linecap="round"/><path d="M477.0 612.4 C491.8 612.4 491.8 620.0 506.6 620.0" fill="none" stroke="#b4b4b4" stroke-width="1.45" stroke-linecap="round"/><path d="M475.8 640.4 C492.3 640.4 492.3 650.8 508.8 650.8" fill="none" stroke="#b4b4b4" stroke-width="1.45" stroke-linecap="round"/><path d="M421.4 650.4 C438.5 650.4 438.5 636.0 455.6 636.0" fill="none" stroke="#b4b4b4" stroke-width="1.45" stroke-linecap="round"/><path d="M389.6 641.6 C394.3 641.6 396.7 650.0 401.4 650.0" fill="none" stroke="#b4b4b4" stroke-width="1.45" stroke-linecap="round"/><path d="M390.8 660.4 C395.0 660.4 397.2 654.0 401.4 654.0" fill="none" stroke="#b4b4b4" stroke-width="1.45" stroke-linecap="round"/><path d="M477.0 679.6 C491.4 679.6 491.4 682.4 505.8 682.4" fill="none" stroke="#b4b4b4" stroke-width="1.45" stroke-linecap="round"/><path d="M662.6 387.0 C679.6 387.0 679.6 408.6 696.6 408.6" fill="none" stroke="#b4b4b4" stroke-width="1.45" stroke-linecap="round"/><path d="M716.2 403.6 C738.9 403.6 738.9 402.0 761.6 402.0" fill="none" stroke="#b4b4b4" stroke-width="1.45" stroke-linecap="round"/><path d="M684.0 428.6 C691.6 428.6 689.0 411.6 696.6 411.6" fill="none" stroke="#b4b4b4" stroke-width="1.45" stroke-linecap="round"/><path d="M650.6 431.2 C657.6 431.2 657.6 432.4 664.6 432.4" fill="none" stroke="#b4b4b4" stroke-width="1.45" stroke-linecap="round"/><path d="M656.0 448.0 C662.0 448.0 658.6 436.0 664.6 436.0" fill="none" stroke="#b4b4b4" stroke-width="1.45" stroke-linecap="round"/><path d="M658.4 487.0 C681.0 487.0 681.0 501.6 703.6 501.6" fill="none" stroke="#b4b4b4" stroke-width="1.45" stroke-linecap="round"/><path d="M723.2 497.8 C741.3 497.8 741.3 501.6 759.4 501.6" fill="none" stroke="#b4b4b4" stroke-width="1.45" stroke-linecap="round"/><path d="M689.4 516.0 C696.5 516.0 696.5 505.6 703.6 505.6" fill="none" stroke="#b4b4b4" stroke-width="1.45" stroke-linecap="round"/><path d="M653.0 522.6 C661.3 522.6 661.3 519.4 669.6 519.4" fill="none" stroke="#b4b4b4" stroke-width="1.45" stroke-linecap="round"/><path d="M658.4 595.2 C681.0 595.2 681.0 598.4 703.6 598.4" fill="none" stroke="#b4b4b4" stroke-width="1.45" stroke-linecap="round"/><path d="M658.4 589.6 C680 589.6 682 598.4 703.6 598.4" fill="none" stroke="#b4b4b4" stroke-width="1.10" stroke-linecap="round"/><path d="M723.2 594.4 C741.8 594.4 741.8 600.2 760.4 600.2" fill="none" stroke="#b4b4b4" stroke-width="1.45" stroke-linecap="round"/><path d="M689.4 612.4 C696.5 612.4 696.5 602.4 703.6 602.4" fill="none" stroke="#b4b4b4" stroke-width="1.45" stroke-linecap="round"/><path d="M653.0 619.2 C661.3 619.2 661.3 616.0 669.6 616.0" fill="none" stroke="#b4b4b4" stroke-width="1.45" stroke-linecap="round"/><path d="M668.0 670.2 C673.6 670.2 669.4 686.6 675.0 686.6" fill="none" stroke="#b4b4b4" stroke-width="1.45" stroke-linecap="round"/><path d="M660.8 691.6 C667.9 691.6 667.9 690.6 675.0 690.6" fill="none" stroke="#b4b4b4" stroke-width="1.45" stroke-linecap="round"/><path d="M694.6 687.4 C698.7 687.4 698.7 686.6 702.8 686.6" fill="none" stroke="#b4b4b4" stroke-width="1.45" stroke-linecap="round"/><path d="M689.4 719.6 C698 719 694 691 702.8 690.6" fill="none" stroke="#b4b4b4" stroke-width="1.10" stroke-linecap="round"/><path d="M722.6 687.2 C728.7 687.2 728.7 692.4 734.8 692.4" fill="none" stroke="#b4b4b4" stroke-width="1.45" stroke-linecap="round"/><rect x="383.3" y="204.2" width="22.5" height="14.5" rx="1.2" fill="#111211"/><rect x="383.7" y="205.1" width="21.7" height="7.4" rx="1.2" fill="url(#g_red)"/><rect x="383.7" y="205.1" width="21.7" height="7.4" rx="1.2" fill="url(#gloss)"/><rect x="384.8" y="206.1" width="16.6" height="4.6" rx="1.2" fill="#000" fill-opacity="0.40"/><circle cx="403.2" cy="215.2" r="1.25" fill="#ffffff"/><rect x="388.3" y="220.8" width="22.5" height="11.4" rx="1.2" fill="#111211"/><rect x="388.7" y="221.7" width="21.7" height="6.0" rx="1.2" fill="url(#g_green)"/><rect x="388.7" y="221.7" width="21.7" height="6.0" rx="1.2" fill="url(#gloss)"/><rect x="389.8" y="222.7" width="16.6" height="3.2" rx="1.2" fill="#000" fill-opacity="0.40"/><circle cx="408.2" cy="229.6" r="1.25" fill="#ffffff"/><rect x="421.2" y="212.8" width="21.7" height="14.8" rx="1.2" fill="#111211"/><rect x="421.6" y="213.7" width="20.9" height="6.4" rx="1.2" fill="url(#g_dgreen)"/><rect x="421.6" y="213.7" width="20.9" height="6.4" rx="1.2" fill="url(#gloss)"/><rect x="422.7" y="214.7" width="16.1" height="3.6" rx="1.2" fill="#000" fill-opacity="0.40"/><circle cx="423.8" cy="222.8" r="1.25" fill="#9a9a9a"/><circle cx="423.8" cy="226.8" r="1.25" fill="#ffffff"/><circle cx="440.1" cy="222.8" r="1.30" fill="#ffffff"/><rect x="504.3" y="158.8" width="22.4" height="34.2" rx="1.2" fill="#111211"/><rect x="504.7" y="159.7" width="21.6" height="6.4" rx="1.2" fill="url(#g_blue)"/><rect x="504.7" y="159.7" width="21.6" height="6.4" rx="1.2" fill="url(#gloss)"/><rect x="505.8" y="160.7" width="16.6" height="3.6" rx="1.2" fill="#000" fill-opacity="0.40"/><circle cx="524.1" cy="168.2" r="1.25" fill="#f0f0f0"/><circle cx="524.1" cy="173.4" r="1.00" fill="#5a2424"/><circle cx="524.1" cy="177.3" r="1.00" fill="#2a6a2e"/><circle cx="524.1" cy="181.2" r="1.00" fill="#24246a"/><circle cx="524.1" cy="185.1" r="1.00" fill="#5e5e5e"/><circle cx="524.1" cy="189.0" r="1.00" fill="#5e5e5e"/><rect x="505.0" y="174.4" width="14.2" height="14.5" fill="#f4eccc"/><rect x="504.9" y="195.8" width="22.3" height="33.0" rx="1.2" fill="#111211"/><rect x="505.3" y="196.7" width="21.5" height="6.4" rx="1.2" fill="url(#g_blue)"/><rect x="505.3" y="196.7" width="21.5" height="6.4" rx="1.2" fill="url(#gloss)"/><rect x="506.4" y="197.7" width="16.5" height="3.6" rx="1.2" fill="#000" fill-opacity="0.40"/><circle cx="524.6" cy="205.2" r="1.25" fill="#f0f0f0"/><circle cx="524.6" cy="210.4" r="1.00" fill="#5a2424"/><circle cx="524.6" cy="214.3" r="1.00" fill="#2a6a2e"/><circle cx="524.6" cy="218.2" r="1.00" fill="#24246a"/><circle cx="524.6" cy="222.1" r="1.00" fill="#5e5e5e"/><circle cx="524.6" cy="226.0" r="1.00" fill="#5e5e5e"/><rect x="505.5" y="210.0" width="14.8" height="15.5" fill="#1414f0"/><rect x="504.9" y="230.0" width="22.3" height="34.7" rx="1.2" fill="#111211"/><rect x="505.3" y="230.9" width="21.5" height="6.4" rx="1.2" fill="url(#g_blue)"/><rect x="505.3" y="230.9" width="21.5" height="6.4" rx="1.2" fill="url(#gloss)"/><rect x="506.4" y="231.9" width="16.5" height="3.6" rx="1.2" fill="#000" fill-opacity="0.40"/><circle cx="524.6" cy="239.4" r="1.25" fill="#f0f0f0"/><circle cx="524.6" cy="244.6" r="1.00" fill="#c02020"/><circle cx="524.6" cy="248.5" r="1.00" fill="#20b030"/><circle cx="524.6" cy="252.4" r="1.00" fill="#2828c8"/><circle cx="524.6" cy="256.3" r="1.00" fill="#8a8a8a"/><circle cx="524.6" cy="260.2" r="1.00" fill="#8a8a8a"/><rect x="505.8" y="246.2" width="14.5" height="14.4" fill="#f8ecc8"/><rect x="544.7" y="160.8" width="22.8" height="11.2" rx="1.2" fill="#111211"/><rect x="545.1" y="161.7" width="22.0" height="6.0" rx="1.2" fill="url(#g_ygreen)"/><rect x="545.1" y="161.7" width="22.0" height="6.0" rx="1.2" fill="url(#gloss)"/><rect x="546.2" y="162.7" width="16.9" height="3.2" rx="1.2" fill="#000" fill-opacity="0.40"/><circle cx="564.9" cy="169.5" r="1.10" fill="#b8b8b8"/><circle cx="547.3" cy="169.5" r="1.25" fill="#ffffff"/><rect x="544.7" y="199.5" width="22.8" height="11.0" rx="1.2" fill="#111211"/><rect x="545.1" y="200.4" width="22.0" height="6.0" rx="1.2" fill="url(#g_ygreen)"/><rect x="545.1" y="200.4" width="22.0" height="6.0" rx="1.2" fill="url(#gloss)"/><rect x="546.2" y="201.4" width="16.9" height="3.2" rx="1.2" fill="#000" fill-opacity="0.40"/><circle cx="564.9" cy="208.1" r="1.10" fill="#b8b8b8"/><circle cx="547.3" cy="208.1" r="1.25" fill="#ffffff"/><rect x="547.2" y="233.3" width="22.5" height="11.0" rx="1.2" fill="#111211"/><rect x="547.6" y="234.2" width="21.7" height="6.0" rx="1.2" fill="url(#g_magenta)"/><rect x="547.6" y="234.2" width="21.7" height="6.0" rx="1.2" fill="url(#gloss)"/><rect x="548.7" y="235.2" width="16.6" height="3.2" rx="1.2" fill="#000" fill-opacity="0.40"/><circle cx="567.1" cy="241.9" r="1.10" fill="#b8b8b8"/><circle cx="549.8" cy="241.9" r="1.25" fill="#ffffff"/><rect x="547.2" y="243.8" width="22.5" height="10.2" rx="1.2" fill="#111211"/><rect x="547.6" y="244.7" width="21.7" height="5.5" rx="1.2" fill="url(#g_orange)"/><rect x="547.6" y="244.7" width="21.7" height="5.5" rx="1.2" fill="url(#gloss)"/><rect x="548.7" y="245.7" width="16.6" height="2.7" rx="1.2" fill="#000" fill-opacity="0.40"/><circle cx="567.1" cy="251.8" r="1.10" fill="#b8b8b8"/><circle cx="549.8" cy="251.8" r="1.25" fill="#ffffff"/><rect x="547.2" y="253.4" width="22.5" height="10.8" rx="1.2" fill="#111211"/><rect x="547.6" y="254.3" width="21.7" height="5.9" rx="1.2" fill="url(#g_purple)"/><rect x="547.6" y="254.3" width="21.7" height="5.9" rx="1.2" fill="url(#gloss)"/><rect x="548.7" y="255.3" width="16.6" height="3.1" rx="1.2" fill="#000" fill-opacity="0.40"/><circle cx="567.1" cy="261.8" r="1.10" fill="#b8b8b8"/><circle cx="549.8" cy="261.8" r="1.25" fill="#ffffff"/><rect x="627.5" y="154.2" width="22.2" height="9.6" rx="1.2" fill="#111211"/><rect x="627.9" y="155.1" width="21.4" height="5.2" rx="1.2" fill="url(#g_green)"/><rect x="627.9" y="155.1" width="21.4" height="5.2" rx="1.2" fill="url(#gloss)"/><rect x="629.0" y="156.1" width="16.4" height="2.4" rx="1.2" fill="#000" fill-opacity="0.40"/><circle cx="647.1" cy="161.7" r="1.25" fill="#ffffff"/><rect x="627.5" y="163.6" width="22.2" height="9.4" rx="1.2" fill="#111211"/><rect x="627.9" y="164.5" width="21.4" height="5.0" rx="1.2" fill="url(#g_ygreen)"/><rect x="627.9" y="164.5" width="21.4" height="5.0" rx="1.2" fill="url(#gloss)"/><rect x="629.0" y="165.5" width="16.4" height="2.2" rx="1.2" fill="#000" fill-opacity="0.40"/><circle cx="647.1" cy="170.9" r="1.25" fill="#ffffff"/><rect x="629.2" y="173.3" width="22.5" height="10.4" rx="1.2" fill="#111211"/><rect x="629.6" y="174.2" width="21.7" height="5.6" rx="1.2" fill="url(#g_green)"/><rect x="629.6" y="174.2" width="21.7" height="5.6" rx="1.2" fill="url(#gloss)"/><rect x="630.7" y="175.2" width="16.6" height="2.8" rx="1.2" fill="#000" fill-opacity="0.40"/><circle cx="649.1" cy="181.4" r="1.25" fill="#ffffff"/><rect x="627.2" y="180.4" width="22.5" height="9.6" rx="1.2" fill="#111211"/><rect x="627.6" y="181.3" width="21.7" height="5.2" rx="1.2" fill="url(#g_orange)"/><rect x="627.6" y="181.3" width="21.7" height="5.2" rx="1.2" fill="url(#gloss)"/><rect x="628.7" y="182.3" width="16.6" height="2.4" rx="1.2" fill="#000" fill-opacity="0.40"/><circle cx="647.1" cy="187.9" r="1.25" fill="#ffffff"/><rect x="627.2" y="189.7" width="22.5" height="11.1" rx="1.2" fill="#111211"/><rect x="627.6" y="190.6" width="21.7" height="6.0" rx="1.2" fill="url(#g_magenta)"/><rect x="627.6" y="190.6" width="21.7" height="6.0" rx="1.2" fill="url(#gloss)"/><rect x="628.7" y="191.6" width="16.6" height="3.2" rx="1.2" fill="#000" fill-opacity="0.40"/><circle cx="647.1" cy="198.4" r="1.25" fill="#ffffff"/><rect x="634.7" y="200.0" width="22.3" height="10.3" rx="1.2" fill="#111211"/><rect x="635.1" y="200.9" width="21.5" height="5.6" rx="1.2" fill="url(#g_green)"/><rect x="635.1" y="200.9" width="21.5" height="5.6" rx="1.2" fill="url(#gloss)"/><rect x="636.2" y="201.9" width="16.5" height="2.8" rx="1.2" fill="#000" fill-opacity="0.40"/><circle cx="654.4" cy="208.0" r="1.25" fill="#ffffff"/><rect x="668.0" y="160.8" width="22.5" height="35.9" rx="1.2" fill="#111211"/><rect x="668.4" y="161.7" width="21.7" height="6.4" rx="1.2" fill="url(#g_dgreen)"/><rect x="668.4" y="161.7" width="21.7" height="6.4" rx="1.2" fill="url(#gloss)"/><rect x="669.5" y="162.7" width="16.6" height="3.6" rx="1.2" fill="#000" fill-opacity="0.40"/><circle cx="670.6" cy="170.8" r="1.25" fill="#ffffff"/><circle cx="670.6" cy="174.8" r="1.25" fill="#ffffff"/><circle cx="670.6" cy="178.8" r="1.25" fill="#ffffff"/><circle cx="670.6" cy="182.8" r="1.25" fill="#ffffff"/><circle cx="670.6" cy="186.8" r="1.25" fill="#ffffff"/><circle cx="670.6" cy="190.8" r="1.25" fill="#ffffff"/><circle cx="670.6" cy="194.8" r="1.25" fill="#ffffff"/><circle cx="687.7" cy="170.8" r="1.30" fill="#ffffff"/><rect x="629.2" y="231.3" width="22.5" height="10.4" rx="1.2" fill="#111211"/><rect x="629.6" y="232.2" width="21.7" height="5.6" rx="1.2" fill="url(#g_ygreen)"/><rect x="629.6" y="232.2" width="21.7" height="5.6" rx="1.2" fill="url(#gloss)"/><rect x="630.7" y="233.2" width="16.6" height="2.8" rx="1.2" fill="#000" fill-opacity="0.40"/><circle cx="649.1" cy="239.4" r="1.25" fill="#ffffff"/><rect x="629.5" y="240.0" width="22.2" height="11.7" rx="1.2" fill="#111211"/><rect x="629.9" y="240.9" width="21.4" height="6.0" rx="1.2" fill="url(#g_magenta)"/><rect x="629.9" y="240.9" width="21.4" height="6.0" rx="1.2" fill="url(#gloss)"/><rect x="631.0" y="241.9" width="16.4" height="3.2" rx="1.2" fill="#000" fill-opacity="0.40"/><circle cx="649.1" cy="249.0" r="1.25" fill="#ffffff"/><rect x="636.7" y="250.8" width="22.5" height="10.5" rx="1.2" fill="#111211"/><rect x="637.1" y="251.7" width="21.7" height="5.7" rx="1.2" fill="url(#g_green)"/><rect x="637.1" y="251.7" width="21.7" height="5.7" rx="1.2" fill="url(#gloss)"/><rect x="638.2" y="252.7" width="16.6" height="2.9" rx="1.2" fill="#000" fill-opacity="0.40"/><circle cx="656.6" cy="259.0" r="1.25" fill="#ffffff"/><rect x="626.2" y="260.0" width="22.6" height="10.3" rx="1.2" fill="#111211"/><rect x="626.6" y="260.9" width="21.8" height="5.6" rx="1.2" fill="url(#g_ygreen)"/><rect x="626.6" y="260.9" width="21.8" height="5.6" rx="1.2" fill="url(#gloss)"/><rect x="627.7" y="261.9" width="16.7" height="2.8" rx="1.2" fill="#000" fill-opacity="0.40"/><circle cx="646.2" cy="268.0" r="1.25" fill="#ffffff"/><rect x="632.0" y="270.0" width="21.8" height="10.3" rx="1.2" fill="#111211"/><rect x="632.4" y="270.9" width="21.0" height="5.6" rx="1.2" fill="url(#g_dblue)"/><rect x="632.4" y="270.9" width="21.0" height="5.6" rx="1.2" fill="url(#gloss)"/><rect x="633.5" y="271.9" width="16.1" height="2.8" rx="1.2" fill="#000" fill-opacity="0.40"/><circle cx="651.2" cy="278.0" r="1.25" fill="#ffffff"/><rect x="639.5" y="279.7" width="22.2" height="10.6" rx="1.2" fill="#111211"/><rect x="639.9" y="280.6" width="21.4" height="5.8" rx="1.2" fill="url(#g_green)"/><rect x="639.9" y="280.6" width="21.4" height="5.8" rx="1.2" fill="url(#gloss)"/><rect x="641.0" y="281.6" width="16.4" height="3.0" rx="1.2" fill="#000" fill-opacity="0.40"/><circle cx="659.1" cy="288.0" r="1.25" fill="#ffffff"/><rect x="665.8" y="231.3" width="22.2" height="34.9" rx="1.2" fill="#111211"/><rect x="666.2" y="232.2" width="21.4" height="6.4" rx="1.2" fill="url(#g_dgreen)"/><rect x="666.2" y="232.2" width="21.4" height="6.4" rx="1.2" fill="url(#gloss)"/><rect x="667.3" y="233.2" width="16.4" height="3.6" rx="1.2" fill="#000" fill-opacity="0.40"/><circle cx="668.4" cy="241.3" r="1.25" fill="#ffffff"/><circle cx="668.4" cy="245.3" r="1.25" fill="#ffffff"/><circle cx="668.4" cy="249.3" r="1.25" fill="#ffffff"/><circle cx="668.4" cy="253.3" r="1.25" fill="#ffffff"/><circle cx="668.4" cy="257.3" r="1.25" fill="#ffffff"/><circle cx="668.4" cy="261.3" r="1.25" fill="#ffffff"/><circle cx="668.4" cy="265.3" r="1.25" fill="#ffffff"/><circle cx="685.2" cy="241.3" r="1.30" fill="#ffffff"/><rect x="632.2" y="313.0" width="22.5" height="10.7" rx="1.2" fill="#111211"/><rect x="632.6" y="313.9" width="21.7" height="5.8" rx="1.2" fill="url(#g_teal)"/><rect x="632.6" y="313.9" width="21.7" height="5.8" rx="1.2" fill="url(#gloss)"/><rect x="633.7" y="314.9" width="16.6" height="3.0" rx="1.2" fill="#000" fill-opacity="0.40"/><circle cx="652.1" cy="321.4" r="1.25" fill="#ffffff"/><rect x="633.0" y="324.2" width="22.5" height="10.8" rx="1.2" fill="#111211"/><rect x="633.4" y="325.1" width="21.7" height="5.9" rx="1.2" fill="url(#g_purple)"/><rect x="633.4" y="325.1" width="21.7" height="5.9" rx="1.2" fill="url(#gloss)"/><rect x="634.5" y="326.1" width="16.6" height="3.1" rx="1.2" fill="#000" fill-opacity="0.40"/><circle cx="652.9" cy="332.6" r="1.25" fill="#ffffff"/><rect x="631.7" y="335.3" width="22.5" height="10.9" rx="1.2" fill="#111211"/><rect x="632.1" y="336.2" width="21.7" height="5.9" rx="1.2" fill="url(#g_teal)"/><rect x="632.1" y="336.2" width="21.7" height="5.9" rx="1.2" fill="url(#gloss)"/><rect x="633.2" y="337.2" width="16.6" height="3.1" rx="1.2" fill="#000" fill-opacity="0.40"/><circle cx="651.6" cy="343.8" r="1.25" fill="#ffffff"/><rect x="672.2" y="315.0" width="22.8" height="23.0" rx="1.2" fill="#111211"/><rect x="672.6" y="315.9" width="22.0" height="6.4" rx="1.2" fill="url(#g_dgreen)"/><rect x="672.6" y="315.9" width="22.0" height="6.4" rx="1.2" fill="url(#gloss)"/><rect x="673.7" y="316.9" width="16.9" height="3.6" rx="1.2" fill="#000" fill-opacity="0.40"/><circle cx="674.8" cy="325.0" r="1.25" fill="#ffffff"/><circle cx="674.8" cy="329.0" r="1.25" fill="#ffffff"/><circle cx="674.8" cy="333.0" r="1.25" fill="#ffffff"/><circle cx="674.8" cy="337.0" r="1.25" fill="#ffffff"/><circle cx="692.2" cy="325.0" r="1.30" fill="#ffffff"/><rect x="784.3" y="189.0" width="22.4" height="19.7" rx="1.2" fill="#111211"/><rect x="784.7" y="189.9" width="21.6" height="6.4" rx="1.2" fill="url(#g_dgreen)"/><rect x="784.7" y="189.9" width="21.6" height="6.4" rx="1.2" fill="url(#gloss)"/><rect x="785.8" y="190.9" width="16.6" height="3.6" rx="1.2" fill="#000" fill-opacity="0.40"/><circle cx="786.9" cy="199.0" r="1.25" fill="#ffffff"/><circle cx="786.9" cy="203.0" r="1.25" fill="#ffffff"/><circle cx="786.9" cy="207.0" r="1.25" fill="#ffffff"/><circle cx="803.9" cy="199.0" r="1.30" fill="#ffffff"/><rect x="745.0" y="213.8" width="22.5" height="11.2" rx="1.2" fill="#111211"/><rect x="745.4" y="214.7" width="21.7" height="6.0" rx="1.2" fill="url(#g_blue)"/><rect x="745.4" y="214.7" width="21.7" height="6.0" rx="1.2" fill="url(#gloss)"/><rect x="746.5" y="215.7" width="16.6" height="3.2" rx="1.2" fill="#000" fill-opacity="0.40"/><circle cx="764.9" cy="222.5" r="1.25" fill="#ffffff"/><rect x="857.0" y="188.0" width="22.2" height="18.3" rx="1.2" fill="#111211"/><rect x="857.4" y="188.9" width="21.4" height="6.4" rx="1.2" fill="url(#g_dgreen)"/><rect x="857.4" y="188.9" width="21.4" height="6.4" rx="1.2" fill="url(#gloss)"/><rect x="858.5" y="189.9" width="16.4" height="3.6" rx="1.2" fill="#000" fill-opacity="0.40"/><circle cx="859.6" cy="198.0" r="1.25" fill="#ffffff"/><circle cx="859.6" cy="202.0" r="1.25" fill="#ffffff"/><circle cx="859.6" cy="206.0" r="1.25" fill="#ffffff"/><circle cx="876.4" cy="198.0" r="1.30" fill="#ffffff"/><rect x="817.5" y="213.8" width="23.1" height="11.2" rx="1.2" fill="#111211"/><rect x="817.9" y="214.7" width="22.3" height="6.0" rx="1.2" fill="url(#g_teal)"/><rect x="817.9" y="214.7" width="22.3" height="6.0" rx="1.2" fill="url(#gloss)"/><rect x="819.0" y="215.7" width="17.1" height="3.2" rx="1.2" fill="#000" fill-opacity="0.40"/><circle cx="838.0" cy="222.5" r="1.25" fill="#ffffff"/><rect x="987.5" y="188.0" width="22.1" height="19.0" rx="1.2" fill="#111211"/><rect x="987.9" y="188.9" width="21.3" height="6.4" rx="1.2" fill="url(#g_dgreen)"/><rect x="987.9" y="188.9" width="21.3" height="6.4" rx="1.2" fill="url(#gloss)"/><rect x="989.0" y="189.9" width="16.4" height="3.6" rx="1.2" fill="#000" fill-opacity="0.40"/><circle cx="990.1" cy="198.0" r="1.25" fill="#ffffff"/><circle cx="990.1" cy="202.0" r="1.25" fill="#ffffff"/><circle cx="990.1" cy="206.0" r="1.25" fill="#ffffff"/><circle cx="1006.8" cy="198.0" r="1.30" fill="#ffffff"/><rect x="950.7" y="209.5" width="22.5" height="11.0" rx="1.2" fill="#111211"/><rect x="951.1" y="210.4" width="21.7" height="6.0" rx="1.2" fill="url(#g_ygreen)"/><rect x="951.1" y="210.4" width="21.7" height="6.0" rx="1.2" fill="url(#gloss)"/><rect x="952.2" y="211.4" width="16.6" height="3.2" rx="1.2" fill="#000" fill-opacity="0.40"/><circle cx="970.6" cy="218.1" r="1.25" fill="#ffffff"/><rect x="1200.0" y="189.4" width="21.8" height="19.4" rx="1.2" fill="#111211"/><rect x="1200.4" y="190.3" width="21.0" height="6.4" rx="1.2" fill="url(#g_dgreen)"/><rect x="1200.4" y="190.3" width="21.0" height="6.4" rx="1.2" fill="url(#gloss)"/><rect x="1201.5" y="191.3" width="16.1" height="3.6" rx="1.2" fill="#000" fill-opacity="0.40"/><circle cx="1202.6" cy="199.4" r="1.25" fill="#ffffff"/><circle cx="1202.6" cy="203.4" r="1.25" fill="#ffffff"/><circle cx="1202.6" cy="207.4" r="1.25" fill="#ffffff"/><circle cx="1219.0" cy="199.4" r="1.30" fill="#ffffff"/><rect x="1163.2" y="207.5" width="21.8" height="10.5" rx="1.2" fill="#111211"/><rect x="1163.6" y="208.4" width="21.0" height="5.7" rx="1.2" fill="url(#g_crimson)"/><rect x="1163.6" y="208.4" width="21.0" height="5.7" rx="1.2" fill="url(#gloss)"/><rect x="1164.7" y="209.4" width="16.1" height="2.9" rx="1.2" fill="#000" fill-opacity="0.40"/><circle cx="1182.4" cy="215.7" r="1.25" fill="#ffffff"/><rect x="1300.8" y="195.0" width="23.0" height="10.6" rx="1.2" fill="#111211"/><rect x="1301.2" y="195.9" width="22.2" height="5.8" rx="1.2" fill="url(#g_tan)"/><rect x="1301.2" y="195.9" width="22.2" height="5.8" rx="1.2" fill="url(#gloss)"/><rect x="1302.3" y="196.9" width="17.0" height="3.0" rx="1.2" fill="#000" fill-opacity="0.40"/><circle cx="1303.4" cy="203.3" r="1.25" fill="#ffffff"/><rect x="835.0" y="260.0" width="22.0" height="30.5" rx="1.2" fill="#111211"/><rect x="835.4" y="260.9" width="21.2" height="6.4" rx="1.2" fill="url(#g_red)"/><rect x="835.4" y="260.9" width="21.2" height="6.4" rx="1.2" fill="url(#gloss)"/><rect x="836.5" y="261.9" width="16.3" height="3.6" rx="1.2" fill="#000" fill-opacity="0.40"/><circle cx="854.4" cy="269.6" r="1.15" fill="#f0f0f0"/><rect x="881.2" y="263.0" width="22.5" height="14.5" rx="1.2" fill="#111211"/><rect x="881.6" y="263.9" width="21.7" height="6.4" rx="1.2" fill="url(#g_dgreen)"/><rect x="881.6" y="263.9" width="21.7" height="6.4" rx="1.2" fill="url(#gloss)"/><rect x="882.7" y="264.9" width="16.6" height="3.6" rx="1.2" fill="#000" fill-opacity="0.40"/><circle cx="883.8" cy="273.0" r="1.25" fill="#9a9a9a"/><circle cx="883.8" cy="277.0" r="1.25" fill="#ffffff"/><circle cx="900.9" cy="273.0" r="1.30" fill="#ffffff"/><rect x="900.7" y="259.5" width="22.3" height="34.7" rx="1.2" fill="#111211"/><rect x="901.1" y="260.4" width="21.5" height="6.4" rx="1.2" fill="url(#g_blue)"/><rect x="901.1" y="260.4" width="21.5" height="6.4" rx="1.2" fill="url(#gloss)"/><rect x="902.2" y="261.4" width="16.5" height="3.6" rx="1.2" fill="#000" fill-opacity="0.40"/><circle cx="920.4" cy="268.9" r="1.25" fill="#f0f0f0"/><circle cx="920.4" cy="274.1" r="1.00" fill="#5a2424"/><circle cx="920.4" cy="278.0" r="1.00" fill="#2a6a2e"/><circle cx="920.4" cy="281.9" r="1.00" fill="#24246a"/><circle cx="920.4" cy="285.8" r="1.00" fill="#5e5e5e"/><circle cx="920.4" cy="289.7" r="1.00" fill="#5e5e5e"/><rect x="900.4" y="275.4" width="15.8" height="14.8" fill="#b4cdf0"/><rect x="900.4" y="275.4" width="15.8" height="14.8" fill="url(#pinkp)" filter="url(#tb)"/><rect x="869.2" y="279.5" width="22.1" height="14.7" rx="1.2" fill="#111211"/><rect x="869.6" y="280.4" width="21.3" height="6.4" rx="1.2" fill="url(#g_dgreen)"/><rect x="869.6" y="280.4" width="21.3" height="6.4" rx="1.2" fill="url(#gloss)"/><rect x="870.7" y="281.4" width="16.4" height="3.6" rx="1.2" fill="#000" fill-opacity="0.40"/><circle cx="871.8" cy="289.5" r="1.25" fill="#9a9a9a"/><circle cx="871.8" cy="293.5" r="1.25" fill="#ffffff"/><circle cx="888.5" cy="289.5" r="1.30" fill="#ffffff"/><rect x="837.0" y="296.2" width="22.5" height="10.8" rx="1.2" fill="#111211"/><rect x="837.4" y="297.1" width="21.7" height="5.9" rx="1.2" fill="url(#g_green)"/><rect x="837.4" y="297.1" width="21.7" height="5.9" rx="1.2" fill="url(#gloss)"/><rect x="838.5" y="298.1" width="16.6" height="3.1" rx="1.2" fill="#000" fill-opacity="0.40"/><circle cx="856.9" cy="304.6" r="1.25" fill="#ffffff"/><rect x="837.0" y="313.0" width="22.5" height="11.2" rx="1.2" fill="#111211"/><rect x="837.4" y="313.9" width="21.7" height="6.0" rx="1.2" fill="url(#g_green)"/><rect x="837.4" y="313.9" width="21.7" height="6.0" rx="1.2" fill="url(#gloss)"/><rect x="838.5" y="314.9" width="16.6" height="3.2" rx="1.2" fill="#000" fill-opacity="0.40"/><circle cx="856.9" cy="321.7" r="1.25" fill="#ffffff"/><rect x="946.2" y="264.5" width="22.1" height="27.3" rx="1.2" fill="#111211"/><rect x="946.6" y="265.4" width="21.3" height="7.4" rx="1.2" fill="url(#g_green)"/><rect x="946.6" y="265.4" width="21.3" height="7.4" rx="1.2" fill="url(#gloss)"/><rect x="947.7" y="266.4" width="16.4" height="4.6" rx="1.2" fill="#000" fill-opacity="0.40"/><circle cx="965.7" cy="275.1" r="1.15" fill="#b0b0b0"/><circle cx="965.7" cy="279.1" r="1.15" fill="#c02020"/><circle cx="965.7" cy="283.1" r="1.15" fill="#20c040"/><circle cx="965.7" cy="287.1" r="1.15" fill="#2030c0"/><rect x="977.5" y="279.2" width="22.5" height="11.3" rx="1.2" fill="#111211"/><rect x="977.9" y="280.1" width="21.7" height="6.0" rx="1.2" fill="url(#g_teal)"/><rect x="977.9" y="280.1" width="21.7" height="6.0" rx="1.2" fill="url(#gloss)"/><rect x="979.0" y="281.1" width="16.6" height="3.2" rx="1.2" fill="#000" fill-opacity="0.40"/><circle cx="997.4" cy="287.9" r="1.25" fill="#ffffff"/><rect x="1004.2" y="260.0" width="22.1" height="19.3" rx="1.2" fill="#111211"/><rect x="1004.6" y="260.9" width="21.3" height="6.4" rx="1.2" fill="url(#g_dgreen)"/><rect x="1004.6" y="260.9" width="21.3" height="6.4" rx="1.2" fill="url(#gloss)"/><rect x="1005.7" y="261.9" width="16.4" height="3.6" rx="1.2" fill="#000" fill-opacity="0.40"/><circle cx="1006.8" cy="270.0" r="1.25" fill="#ffffff"/><circle cx="1006.8" cy="274.0" r="1.25" fill="#ffffff"/><circle cx="1006.8" cy="278.0" r="1.25" fill="#ffffff"/><circle cx="1023.5" cy="270.0" r="1.30" fill="#ffffff"/><rect x="1066.7" y="269.5" width="22.1" height="11.0" rx="1.2" fill="#111211"/><rect x="1067.1" y="270.4" width="21.3" height="6.0" rx="1.2" fill="url(#g_purple)"/><rect x="1067.1" y="270.4" width="21.3" height="6.0" rx="1.2" fill="url(#gloss)"/><rect x="1068.2" y="271.4" width="16.4" height="3.2" rx="1.2" fill="#000" fill-opacity="0.40"/><circle cx="1086.2" cy="278.1" r="1.25" fill="#ffffff"/><rect x="1073.7" y="280.0" width="22.1" height="10.8" rx="1.2" fill="#111211"/><rect x="1074.1" y="280.9" width="21.3" height="5.9" rx="1.2" fill="url(#g_yellow)"/><rect x="1074.1" y="280.9" width="21.3" height="5.9" rx="1.2" fill="url(#gloss)"/><rect x="1075.2" y="281.9" width="16.4" height="3.1" rx="1.2" fill="#000" fill-opacity="0.40"/><circle cx="1093.2" cy="288.4" r="1.25" fill="#ffffff"/><rect x="1134.2" y="265.7" width="22.1" height="19.3" rx="1.2" fill="#111211"/><rect x="1134.6" y="266.6" width="21.3" height="6.4" rx="1.2" fill="url(#g_dgreen)"/><rect x="1134.6" y="266.6" width="21.3" height="6.4" rx="1.2" fill="url(#gloss)"/><rect x="1135.7" y="267.6" width="16.4" height="3.6" rx="1.2" fill="#000" fill-opacity="0.40"/><circle cx="1136.8" cy="275.7" r="1.25" fill="#ffffff"/><circle cx="1136.8" cy="279.7" r="1.25" fill="#ffffff"/><circle cx="1136.8" cy="283.7" r="1.25" fill="#ffffff"/><circle cx="1153.5" cy="275.7" r="1.30" fill="#ffffff"/><rect x="383.3" y="344.2" width="22.5" height="14.2" rx="1.2" fill="#111211"/><rect x="383.7" y="345.1" width="21.7" height="7.4" rx="1.2" fill="url(#g_red)"/><rect x="383.7" y="345.1" width="21.7" height="7.4" rx="1.2" fill="url(#gloss)"/><rect x="384.8" y="346.1" width="16.6" height="4.6" rx="1.2" fill="#000" fill-opacity="0.40"/><circle cx="403.2" cy="355.1" r="1.25" fill="#ffffff"/><rect x="388.0" y="361.2" width="22.5" height="11.4" rx="1.2" fill="#111211"/><rect x="388.4" y="362.1" width="21.7" height="6.0" rx="1.2" fill="url(#g_green)"/><rect x="388.4" y="362.1" width="21.7" height="6.0" rx="1.2" fill="url(#gloss)"/><rect x="389.5" y="363.1" width="16.6" height="3.2" rx="1.2" fill="#000" fill-opacity="0.40"/><circle cx="407.9" cy="370.0" r="1.25" fill="#ffffff"/><rect x="421.7" y="352.0" width="21.7" height="14.8" rx="1.2" fill="#111211"/><rect x="422.1" y="352.9" width="20.9" height="6.4" rx="1.2" fill="url(#g_dgreen)"/><rect x="422.1" y="352.9" width="20.9" height="6.4" rx="1.2" fill="url(#gloss)"/><rect x="423.2" y="353.9" width="16.1" height="3.6" rx="1.2" fill="#000" fill-opacity="0.40"/><circle cx="424.3" cy="362.0" r="1.25" fill="#9a9a9a"/><circle cx="424.3" cy="366.0" r="1.25" fill="#ffffff"/><circle cx="440.6" cy="362.0" r="1.30" fill="#ffffff"/><rect x="506.3" y="298.6" width="22.5" height="34.2" rx="1.2" fill="#111211"/><rect x="506.7" y="299.5" width="21.7" height="6.4" rx="1.2" fill="url(#g_blue)"/><rect x="506.7" y="299.5" width="21.7" height="6.4" rx="1.2" fill="url(#gloss)"/><rect x="507.8" y="300.5" width="16.6" height="3.6" rx="1.2" fill="#000" fill-opacity="0.40"/><circle cx="526.2" cy="308.0" r="1.25" fill="#f0f0f0"/><circle cx="526.2" cy="313.2" r="1.00" fill="#5a2424"/><circle cx="526.2" cy="317.1" r="1.00" fill="#2a6a2e"/><circle cx="526.2" cy="321.0" r="1.00" fill="#24246a"/><circle cx="526.2" cy="324.9" r="1.00" fill="#5e5e5e"/><circle cx="526.2" cy="328.8" r="1.00" fill="#5e5e5e"/><rect x="507.0" y="314.2" width="14.7" height="14.7" fill="#e8a878"/><rect x="506.3" y="335.0" width="22.5" height="33.8" rx="1.2" fill="#111211"/><rect x="506.7" y="335.9" width="21.7" height="6.4" rx="1.2" fill="url(#g_blue)"/><rect x="506.7" y="335.9" width="21.7" height="6.4" rx="1.2" fill="url(#gloss)"/><rect x="507.8" y="336.9" width="16.6" height="3.6" rx="1.2" fill="#000" fill-opacity="0.40"/><circle cx="526.2" cy="344.4" r="1.25" fill="#f0f0f0"/><circle cx="526.2" cy="349.6" r="1.00" fill="#5a2424"/><circle cx="526.2" cy="353.5" r="1.00" fill="#2a6a2e"/><circle cx="526.2" cy="357.4" r="1.00" fill="#24246a"/><circle cx="526.2" cy="361.3" r="1.00" fill="#5e5e5e"/><circle cx="526.2" cy="365.2" r="1.00" fill="#5e5e5e"/><rect x="507.0" y="350.0" width="14.7" height="15.0" fill="#1a1af4"/><rect x="506.3" y="371.3" width="22.5" height="33.7" rx="1.2" fill="#111211"/><rect x="506.7" y="372.2" width="21.7" height="6.4" rx="1.2" fill="url(#g_blue)"/><rect x="506.7" y="372.2" width="21.7" height="6.4" rx="1.2" fill="url(#gloss)"/><rect x="507.8" y="373.2" width="16.6" height="3.6" rx="1.2" fill="#000" fill-opacity="0.40"/><circle cx="526.2" cy="380.7" r="1.25" fill="#f0f0f0"/><circle cx="526.2" cy="385.9" r="1.00" fill="#c02020"/><circle cx="526.2" cy="389.8" r="1.00" fill="#20b030"/><circle cx="526.2" cy="393.7" r="1.00" fill="#2828c8"/><circle cx="526.2" cy="397.6" r="1.00" fill="#8a8a8a"/><circle cx="526.2" cy="401.5" r="1.00" fill="#8a8a8a"/><rect x="507.0" y="386.3" width="14.7" height="14.6" fill="#f4f0e0"/><rect x="552.0" y="300.8" width="22.7" height="11.2" rx="1.2" fill="#111211"/><rect x="552.4" y="301.7" width="21.9" height="6.0" rx="1.2" fill="url(#g_ygreen)"/><rect x="552.4" y="301.7" width="21.9" height="6.0" rx="1.2" fill="url(#gloss)"/><rect x="553.5" y="302.7" width="16.8" height="3.2" rx="1.2" fill="#000" fill-opacity="0.40"/><circle cx="572.1" cy="309.5" r="1.10" fill="#b8b8b8"/><circle cx="554.6" cy="309.5" r="1.25" fill="#ffffff"/><rect x="552.0" y="337.2" width="22.7" height="11.2" rx="1.2" fill="#111211"/><rect x="552.4" y="338.1" width="21.9" height="6.0" rx="1.2" fill="url(#g_magenta)"/><rect x="552.4" y="338.1" width="21.9" height="6.0" rx="1.2" fill="url(#gloss)"/><rect x="553.5" y="339.1" width="16.8" height="3.2" rx="1.2" fill="#000" fill-opacity="0.40"/><circle cx="572.1" cy="345.9" r="1.10" fill="#b8b8b8"/><circle cx="554.6" cy="345.9" r="1.25" fill="#ffffff"/><rect x="552.0" y="375.8" width="22.7" height="11.0" rx="1.2" fill="#111211"/><rect x="552.4" y="376.7" width="21.9" height="6.0" rx="1.2" fill="url(#g_dblue)"/><rect x="552.4" y="376.7" width="21.9" height="6.0" rx="1.2" fill="url(#gloss)"/><rect x="553.5" y="377.7" width="16.8" height="3.2" rx="1.2" fill="#000" fill-opacity="0.40"/><circle cx="572.1" cy="384.4" r="1.10" fill="#b8b8b8"/><circle cx="554.6" cy="384.4" r="1.25" fill="#ffffff"/><rect x="550.0" y="385.3" width="22.5" height="11.1" rx="1.2" fill="#111211"/><rect x="550.4" y="386.2" width="21.7" height="6.0" rx="1.2" fill="url(#g_ygreen)"/><rect x="550.4" y="386.2" width="21.7" height="6.0" rx="1.2" fill="url(#gloss)"/><rect x="551.5" y="387.2" width="16.6" height="3.2" rx="1.2" fill="#000" fill-opacity="0.40"/><circle cx="569.9" cy="393.9" r="1.10" fill="#b8b8b8"/><circle cx="552.6" cy="393.9" r="1.25" fill="#ffffff"/><rect x="552.0" y="395.0" width="22.7" height="11.7" rx="1.2" fill="#111211"/><rect x="552.4" y="395.9" width="21.9" height="6.0" rx="1.2" fill="url(#g_purple)"/><rect x="552.4" y="395.9" width="21.9" height="6.0" rx="1.2" fill="url(#gloss)"/><rect x="553.5" y="396.9" width="16.8" height="3.2" rx="1.2" fill="#000" fill-opacity="0.40"/><circle cx="572.1" cy="403.9" r="1.10" fill="#b8b8b8"/><circle cx="554.6" cy="403.9" r="1.25" fill="#ffffff"/><rect x="469.5" y="431.6" width="22.2" height="27.6" rx="1.2" fill="#111211"/><rect x="469.9" y="432.5" width="21.4" height="6.4" rx="1.2" fill="url(#g_gold)"/><rect x="469.9" y="432.5" width="21.4" height="6.4" rx="1.2" fill="url(#gloss)"/><rect x="471.0" y="433.5" width="16.4" height="3.6" rx="1.2" fill="#000" fill-opacity="0.40"/><circle cx="489.1" cy="441.2" r="1.25" fill="#f0f0f0"/><circle cx="489.1" cy="449.6" r="1.00" fill="#2a7a30"/><circle cx="489.1" cy="456.6" r="1.00" fill="#6a6a6a"/><rect x="470.0" y="443.0" width="15.0" height="14.6" fill="#ffffff"/><rect x="520.3" y="439.5" width="22.7" height="10.9" rx="1.2" fill="#111211"/><rect x="520.7" y="440.4" width="21.9" height="5.9" rx="1.2" fill="url(#g_teal)"/><rect x="520.7" y="440.4" width="21.9" height="5.9" rx="1.2" fill="url(#gloss)"/><rect x="521.8" y="441.4" width="16.8" height="3.1" rx="1.2" fill="#000" fill-opacity="0.40"/><circle cx="540.4" cy="448.0" r="1.10" fill="#b8b8b8"/><circle cx="522.9" cy="448.0" r="1.25" fill="#ffffff"/><rect x="468.0" y="470.5" width="22.4" height="10.7" rx="1.2" fill="#111211"/><rect x="468.4" y="471.4" width="21.6" height="5.8" rx="1.2" fill="url(#g_green)"/><rect x="468.4" y="471.4" width="21.6" height="5.8" rx="1.2" fill="url(#gloss)"/><rect x="469.5" y="472.4" width="16.6" height="3.0" rx="1.2" fill="#000" fill-opacity="0.40"/><circle cx="487.8" cy="478.9" r="1.25" fill="#ffffff"/><rect x="518.3" y="473.0" width="22.6" height="11.2" rx="1.2" fill="#111211"/><rect x="518.7" y="473.9" width="21.8" height="6.0" rx="1.2" fill="url(#g_purple)"/><rect x="518.7" y="473.9" width="21.8" height="6.0" rx="1.2" fill="url(#gloss)"/><rect x="519.8" y="474.9" width="16.7" height="3.2" rx="1.2" fill="#000" fill-opacity="0.40"/><circle cx="538.3" cy="481.7" r="1.10" fill="#b8b8b8"/><circle cx="520.9" cy="481.7" r="1.25" fill="#ffffff"/><rect x="460.8" y="490.3" width="22.6" height="10.6" rx="1.2" fill="#111211"/><rect x="461.2" y="491.2" width="21.8" height="5.8" rx="1.2" fill="url(#g_ygreen)"/><rect x="461.2" y="491.2" width="21.8" height="5.8" rx="1.2" fill="url(#gloss)"/><rect x="462.3" y="492.2" width="16.7" height="3.0" rx="1.2" fill="#000" fill-opacity="0.40"/><circle cx="480.8" cy="498.6" r="1.25" fill="#ffffff"/><rect x="495.3" y="497.2" width="22.3" height="15.4" rx="1.2" fill="#111211"/><rect x="495.7" y="498.1" width="21.5" height="6.4" rx="1.2" fill="url(#g_dgreen)"/><rect x="495.7" y="498.1" width="21.5" height="6.4" rx="1.2" fill="url(#gloss)"/><rect x="496.8" y="499.1" width="16.5" height="3.6" rx="1.2" fill="#000" fill-opacity="0.40"/><circle cx="497.9" cy="507.2" r="1.25" fill="#9a9a9a"/><circle cx="497.9" cy="511.2" r="1.25" fill="#ffffff"/><circle cx="514.8" cy="507.2" r="1.30" fill="#ffffff"/><rect x="532.5" y="504.2" width="22.9" height="10.8" rx="1.2" fill="#111211"/><rect x="532.9" y="505.1" width="22.1" height="5.9" rx="1.2" fill="url(#g_teal)"/><rect x="532.9" y="505.1" width="22.1" height="5.9" rx="1.2" fill="url(#gloss)"/><rect x="534.0" y="506.1" width="16.9" height="3.1" rx="1.2" fill="#000" fill-opacity="0.40"/><circle cx="552.8" cy="512.6" r="1.10" fill="#b8b8b8"/><circle cx="535.1" cy="512.6" r="1.25" fill="#ffffff"/><rect x="431.7" y="512.0" width="22.2" height="10.6" rx="1.2" fill="#111211"/><rect x="432.1" y="512.9" width="21.4" height="5.8" rx="1.2" fill="url(#g_green)"/><rect x="432.1" y="512.9" width="21.4" height="5.8" rx="1.2" fill="url(#gloss)"/><rect x="433.2" y="513.9" width="16.4" height="3.0" rx="1.2" fill="#000" fill-opacity="0.40"/><circle cx="451.3" cy="520.3" r="1.25" fill="#ffffff"/><rect x="467.8" y="514.5" width="22.8" height="18.9" rx="1.2" fill="#111211"/><rect x="468.2" y="515.4" width="22.0" height="6.4" rx="1.2" fill="url(#g_bgray)"/><rect x="468.2" y="515.4" width="22.0" height="6.4" rx="1.2" fill="url(#gloss)"/><rect x="469.3" y="516.4" width="16.9" height="3.6" rx="1.2" fill="#000" fill-opacity="0.40"/><circle cx="470.4" cy="524.5" r="1.25" fill="#9a9a9a"/><circle cx="470.4" cy="528.5" r="1.25" fill="#ffffff"/><circle cx="487.8" cy="524.5" r="1.30" fill="#ffffff"/><rect x="453.3" y="528.3" width="22.6" height="10.9" rx="1.2" fill="#111211"/><rect x="453.7" y="529.2" width="21.8" height="5.9" rx="1.2" fill="url(#g_green)"/><rect x="453.7" y="529.2" width="21.8" height="5.9" rx="1.2" fill="url(#gloss)"/><rect x="454.8" y="530.2" width="16.7" height="3.1" rx="1.2" fill="#000" fill-opacity="0.40"/><circle cx="473.3" cy="536.8" r="1.25" fill="#ffffff"/><rect x="458.7" y="570.8" width="22.2" height="27.2" rx="1.2" fill="#111211"/><rect x="459.1" y="571.7" width="21.4" height="6.4" rx="1.2" fill="url(#g_gold)"/><rect x="459.1" y="571.7" width="21.4" height="6.4" rx="1.2" fill="url(#gloss)"/><rect x="460.2" y="572.7" width="16.4" height="3.6" rx="1.2" fill="#000" fill-opacity="0.40"/><circle cx="478.3" cy="580.4" r="1.25" fill="#f0f0f0"/><circle cx="478.3" cy="588.8" r="1.00" fill="#2a7a30"/><circle cx="478.3" cy="595.4" r="1.00" fill="#6a6a6a"/><rect x="458.9" y="582.2" width="15.3" height="14.2" fill="#ffffff"/><rect x="506.2" y="578.3" width="22.7" height="10.9" rx="1.2" fill="#111211"/><rect x="506.6" y="579.2" width="21.9" height="5.9" rx="1.2" fill="url(#g_purple)"/><rect x="506.6" y="579.2" width="21.9" height="5.9" rx="1.2" fill="url(#gloss)"/><rect x="507.7" y="580.2" width="16.8" height="3.1" rx="1.2" fill="#000" fill-opacity="0.40"/><circle cx="526.3" cy="586.8" r="1.10" fill="#b8b8b8"/><circle cx="508.8" cy="586.8" r="1.25" fill="#ffffff"/><rect x="455.8" y="602.8" width="22.6" height="11.4" rx="1.2" fill="#111211"/><rect x="456.2" y="603.7" width="21.8" height="6.0" rx="1.2" fill="url(#g_green)"/><rect x="456.2" y="603.7" width="21.8" height="6.0" rx="1.2" fill="url(#gloss)"/><rect x="457.3" y="604.7" width="16.7" height="3.2" rx="1.2" fill="#000" fill-opacity="0.40"/><circle cx="475.8" cy="611.6" r="1.25" fill="#ffffff"/><rect x="505.0" y="610.8" width="22.6" height="10.9" rx="1.2" fill="#111211"/><rect x="505.4" y="611.7" width="21.8" height="5.9" rx="1.2" fill="url(#g_yellow)"/><rect x="505.4" y="611.7" width="21.8" height="5.9" rx="1.2" fill="url(#gloss)"/><rect x="506.5" y="612.7" width="16.7" height="3.1" rx="1.2" fill="#000" fill-opacity="0.40"/><circle cx="525.0" cy="619.3" r="1.10" fill="#b8b8b8"/><circle cx="507.6" cy="619.3" r="1.25" fill="#ffffff"/><rect x="454.2" y="626.6" width="22.8" height="34.3" rx="1.2" fill="#111211"/><rect x="454.6" y="627.5" width="22.0" height="6.4" rx="1.2" fill="url(#g_blue)"/><rect x="454.6" y="627.5" width="22.0" height="6.4" rx="1.2" fill="url(#gloss)"/><rect x="455.7" y="628.5" width="16.9" height="3.6" rx="1.2" fill="#000" fill-opacity="0.40"/><circle cx="474.4" cy="636.0" r="1.25" fill="#f0f0f0"/><circle cx="474.4" cy="641.2" r="1.00" fill="#5a2424"/><circle cx="474.4" cy="645.1" r="1.00" fill="#2a6a2e"/><circle cx="474.4" cy="649.0" r="1.00" fill="#24246a"/><circle cx="474.4" cy="652.9" r="1.00" fill="#5e5e5e"/><circle cx="474.4" cy="656.8" r="1.00" fill="#5e5e5e"/><rect x="455.0" y="641.6" width="14.7" height="15.1" fill="#ececec"/><rect x="455.0" y="641.6" width="14.7" height="15.1" fill="url(#noisep)"/><rect x="507.2" y="641.6" width="22.4" height="11.0" rx="1.2" fill="#111211"/><rect x="507.6" y="642.5" width="21.6" height="6.0" rx="1.2" fill="url(#g_magenta)"/><rect x="507.6" y="642.5" width="21.6" height="6.0" rx="1.2" fill="url(#gloss)"/><rect x="508.7" y="643.5" width="16.6" height="3.2" rx="1.2" fill="#000" fill-opacity="0.40"/><circle cx="527.0" cy="650.2" r="1.10" fill="#b8b8b8"/><circle cx="509.8" cy="650.2" r="1.25" fill="#ffffff"/><rect x="368.0" y="632.0" width="22.9" height="11.4" rx="1.2" fill="#111211"/><rect x="368.4" y="632.9" width="22.1" height="6.0" rx="1.2" fill="url(#g_green)"/><rect x="368.4" y="632.9" width="22.1" height="6.0" rx="1.2" fill="url(#gloss)"/><rect x="369.5" y="633.9" width="16.9" height="3.2" rx="1.2" fill="#000" fill-opacity="0.40"/><circle cx="388.3" cy="640.8" r="1.25" fill="#ffffff"/><rect x="399.7" y="641.3" width="22.9" height="15.1" rx="1.2" fill="#111211"/><rect x="400.1" y="642.2" width="22.1" height="6.4" rx="1.2" fill="url(#g_dgreen)"/><rect x="400.1" y="642.2" width="22.1" height="6.4" rx="1.2" fill="url(#gloss)"/><rect x="401.2" y="643.2" width="16.9" height="3.6" rx="1.2" fill="#000" fill-opacity="0.40"/><circle cx="402.3" cy="651.3" r="1.25" fill="#9a9a9a"/><circle cx="402.3" cy="655.3" r="1.25" fill="#ffffff"/><circle cx="419.8" cy="651.3" r="1.30" fill="#ffffff"/><rect x="369.7" y="651.3" width="22.5" height="14.1" rx="1.2" fill="#111211"/><rect x="370.1" y="652.2" width="21.7" height="7.4" rx="1.2" fill="url(#g_red)"/><rect x="370.1" y="652.2" width="21.7" height="7.4" rx="1.2" fill="url(#gloss)"/><rect x="371.2" y="653.2" width="16.6" height="4.6" rx="1.2" fill="#000" fill-opacity="0.40"/><circle cx="389.6" cy="662.1" r="1.25" fill="#ffffff"/><rect x="455.8" y="670.3" width="22.6" height="11.1" rx="1.2" fill="#111211"/><rect x="456.2" y="671.2" width="21.8" height="6.0" rx="1.2" fill="url(#g_green)"/><rect x="456.2" y="671.2" width="21.8" height="6.0" rx="1.2" fill="url(#gloss)"/><rect x="457.3" y="672.2" width="16.7" height="3.2" rx="1.2" fill="#000" fill-opacity="0.40"/><circle cx="475.8" cy="678.9" r="1.25" fill="#ffffff"/><rect x="504.2" y="672.5" width="22.6" height="11.7" rx="1.2" fill="#111211"/><rect x="504.6" y="673.4" width="21.8" height="6.0" rx="1.2" fill="url(#g_tealg)"/><rect x="504.6" y="673.4" width="21.8" height="6.0" rx="1.2" fill="url(#gloss)"/><rect x="505.7" y="674.4" width="16.7" height="3.2" rx="1.2" fill="#000" fill-opacity="0.40"/><circle cx="524.2" cy="681.4" r="1.10" fill="#b8b8b8"/><circle cx="506.8" cy="681.4" r="1.25" fill="#ffffff"/><rect x="641.7" y="373.8" width="22.2" height="26.8" rx="1.2" fill="#111211"/><rect x="642.1" y="374.7" width="21.4" height="6.4" rx="1.2" fill="url(#g_red)"/><rect x="642.1" y="374.7" width="21.4" height="6.4" rx="1.2" fill="url(#gloss)"/><rect x="643.2" y="375.7" width="16.4" height="3.6" rx="1.2" fill="#000" fill-opacity="0.40"/><circle cx="661.3" cy="383.4" r="1.15" fill="#b0b0b0"/><circle cx="661.3" cy="387.4" r="1.15" fill="#c02020"/><circle cx="661.3" cy="391.4" r="1.15" fill="#20c040"/><circle cx="661.3" cy="395.4" r="1.15" fill="#2030c0"/><circle cx="661.3" cy="399.4" r="1.15" fill="#b08080"/><rect x="695.0" y="390.0" width="22.6" height="27.6" rx="1.2" fill="#111211"/><rect x="695.4" y="390.9" width="21.8" height="6.4" rx="1.2" fill="url(#g_bgray)"/><rect x="695.4" y="390.9" width="21.8" height="6.4" rx="1.2" fill="url(#gloss)"/><rect x="696.5" y="391.9" width="16.7" height="3.6" rx="1.2" fill="#000" fill-opacity="0.40"/><circle cx="697.6" cy="408.0" r="1.25" fill="#ffffff"/><circle cx="714.8" cy="400.0" r="1.00" fill="#8a8a8a"/><circle cx="714.8" cy="404.0" r="1.30" fill="#ffffff"/><circle cx="714.8" cy="408.0" r="1.00" fill="#8a8a8a"/><rect x="760.0" y="392.5" width="22.9" height="11.3" rx="1.2" fill="#111211"/><rect x="760.4" y="393.4" width="22.1" height="6.0" rx="1.2" fill="url(#g_blue)"/><rect x="760.4" y="393.4" width="22.1" height="6.0" rx="1.2" fill="url(#gloss)"/><rect x="761.5" y="394.4" width="16.9" height="3.2" rx="1.2" fill="#000" fill-opacity="0.40"/><circle cx="780.3" cy="401.2" r="1.10" fill="#b8b8b8"/><circle cx="762.6" cy="401.2" r="1.25" fill="#ffffff"/><rect x="646.7" y="411.3" width="22.5" height="10.9" rx="1.2" fill="#111211"/><rect x="647.1" y="412.2" width="21.7" height="5.9" rx="1.2" fill="url(#g_green)"/><rect x="647.1" y="412.2" width="21.7" height="5.9" rx="1.2" fill="url(#gloss)"/><rect x="648.2" y="413.2" width="16.6" height="3.1" rx="1.2" fill="#000" fill-opacity="0.40"/><circle cx="666.6" cy="419.8" r="1.25" fill="#ffffff"/><rect x="629.5" y="421.7" width="22.3" height="11.2" rx="1.2" fill="#111211"/><rect x="629.9" y="422.6" width="21.5" height="6.0" rx="1.2" fill="url(#g_green)"/><rect x="629.9" y="422.6" width="21.5" height="6.0" rx="1.2" fill="url(#gloss)"/><rect x="631.0" y="423.6" width="16.5" height="3.2" rx="1.2" fill="#000" fill-opacity="0.40"/><circle cx="649.2" cy="430.4" r="1.25" fill="#ffffff"/><rect x="663.0" y="419.7" width="22.0" height="19.2" rx="1.2" fill="#111211"/><rect x="663.4" y="420.6" width="21.2" height="6.4" rx="1.2" fill="url(#g_dgreen)"/><rect x="663.4" y="420.6" width="21.2" height="6.4" rx="1.2" fill="url(#gloss)"/><rect x="664.5" y="421.6" width="16.3" height="3.6" rx="1.2" fill="#000" fill-opacity="0.40"/><circle cx="665.6" cy="429.7" r="1.25" fill="#9a9a9a"/><circle cx="665.6" cy="433.7" r="1.25" fill="#ffffff"/><circle cx="682.2" cy="429.7" r="1.30" fill="#ffffff"/><rect x="634.7" y="438.8" width="22.5" height="11.0" rx="1.2" fill="#111211"/><rect x="635.1" y="439.7" width="21.7" height="6.0" rx="1.2" fill="url(#g_purple)"/><rect x="635.1" y="439.7" width="21.7" height="6.0" rx="1.2" fill="url(#gloss)"/><rect x="636.2" y="440.7" width="16.6" height="3.2" rx="1.2" fill="#000" fill-opacity="0.40"/><circle cx="654.6" cy="447.4" r="1.25" fill="#ffffff"/><rect x="637.0" y="470.0" width="22.6" height="27.0" rx="1.2" fill="#111211"/><rect x="637.4" y="470.9" width="21.8" height="6.4" rx="1.2" fill="url(#g_red)"/><rect x="637.4" y="470.9" width="21.8" height="6.4" rx="1.2" fill="url(#gloss)"/><rect x="638.5" y="471.9" width="16.7" height="3.6" rx="1.2" fill="#000" fill-opacity="0.40"/><circle cx="657.0" cy="479.6" r="1.15" fill="#b0b0b0"/><circle cx="657.0" cy="483.6" r="1.15" fill="#c02020"/><circle cx="657.0" cy="487.6" r="1.15" fill="#20c040"/><circle cx="657.0" cy="491.6" r="1.15" fill="#2030c0"/><circle cx="657.0" cy="495.6" r="1.15" fill="#b08080"/><rect x="702.0" y="484.2" width="22.6" height="27.8" rx="1.2" fill="#111211"/><rect x="702.4" y="485.1" width="21.8" height="6.4" rx="1.2" fill="url(#g_bgray)"/><rect x="702.4" y="485.1" width="21.8" height="6.4" rx="1.2" fill="url(#gloss)"/><rect x="703.5" y="486.1" width="16.7" height="3.6" rx="1.2" fill="#000" fill-opacity="0.40"/><circle cx="704.6" cy="502.2" r="1.25" fill="#ffffff"/><circle cx="721.8" cy="494.2" r="1.00" fill="#8a8a8a"/><circle cx="721.8" cy="498.2" r="1.30" fill="#ffffff"/><circle cx="721.8" cy="502.2" r="1.00" fill="#8a8a8a"/><rect x="757.8" y="492.2" width="22.6" height="11.2" rx="1.2" fill="#111211"/><rect x="758.2" y="493.1" width="21.8" height="6.0" rx="1.2" fill="url(#g_teal)"/><rect x="758.2" y="493.1" width="21.8" height="6.0" rx="1.2" fill="url(#gloss)"/><rect x="759.3" y="494.1" width="16.7" height="3.2" rx="1.2" fill="#000" fill-opacity="0.40"/><circle cx="777.8" cy="500.9" r="1.10" fill="#b8b8b8"/><circle cx="760.4" cy="500.9" r="1.25" fill="#ffffff"/><rect x="651.2" y="501.7" width="22.7" height="10.5" rx="1.2" fill="#111211"/><rect x="651.6" y="502.6" width="21.9" height="5.7" rx="1.2" fill="url(#g_green)"/><rect x="651.6" y="502.6" width="21.9" height="5.7" rx="1.2" fill="url(#gloss)"/><rect x="652.7" y="503.6" width="16.8" height="2.9" rx="1.2" fill="#000" fill-opacity="0.40"/><circle cx="671.3" cy="509.9" r="1.25" fill="#ffffff"/><rect x="668.0" y="506.7" width="22.6" height="19.2" rx="1.2" fill="#111211"/><rect x="668.4" y="507.6" width="21.8" height="6.4" rx="1.2" fill="url(#g_dgreen)"/><rect x="668.4" y="507.6" width="21.8" height="6.4" rx="1.2" fill="url(#gloss)"/><rect x="669.5" y="508.6" width="16.7" height="3.6" rx="1.2" fill="#000" fill-opacity="0.40"/><circle cx="670.6" cy="516.7" r="1.25" fill="#9a9a9a"/><circle cx="670.6" cy="520.7" r="1.25" fill="#ffffff"/><circle cx="687.8" cy="516.7" r="1.30" fill="#ffffff"/><rect x="631.7" y="513.3" width="22.5" height="10.9" rx="1.2" fill="#111211"/><rect x="632.1" y="514.2" width="21.7" height="5.9" rx="1.2" fill="url(#g_green)"/><rect x="632.1" y="514.2" width="21.7" height="5.9" rx="1.2" fill="url(#gloss)"/><rect x="633.2" y="515.2" width="16.6" height="3.1" rx="1.2" fill="#000" fill-opacity="0.40"/><circle cx="651.6" cy="521.8" r="1.25" fill="#ffffff"/><rect x="636.7" y="530.5" width="22.9" height="11.3" rx="1.2" fill="#111211"/><rect x="637.1" y="531.4" width="22.1" height="6.0" rx="1.2" fill="url(#g_purple)"/><rect x="637.1" y="531.4" width="22.1" height="6.0" rx="1.2" fill="url(#gloss)"/><rect x="638.2" y="532.4" width="16.9" height="3.2" rx="1.2" fill="#000" fill-opacity="0.40"/><circle cx="657.0" cy="539.2" r="1.25" fill="#ffffff"/><rect x="663.3" y="530.5" width="22.9" height="11.3" rx="1.2" fill="#111211"/><rect x="663.7" y="531.4" width="22.1" height="6.0" rx="1.2" fill="url(#g_dgreen)"/><rect x="663.7" y="531.4" width="22.1" height="6.0" rx="1.2" fill="url(#gloss)"/><rect x="664.8" y="532.4" width="16.9" height="3.2" rx="1.2" fill="#000" fill-opacity="0.40"/><circle cx="683.6" cy="539.2" r="1.10" fill="#b8b8b8"/><circle cx="665.9" cy="539.2" r="1.25" fill="#ffffff"/><rect x="637.0" y="564.2" width="22.6" height="27.5" rx="1.2" fill="#111211"/><rect x="637.4" y="565.1" width="21.8" height="6.4" rx="1.2" fill="url(#g_red)"/><rect x="637.4" y="565.1" width="21.8" height="6.4" rx="1.2" fill="url(#gloss)"/><rect x="638.5" y="566.1" width="16.7" height="3.6" rx="1.2" fill="#000" fill-opacity="0.40"/><circle cx="657.0" cy="573.8" r="1.15" fill="#b0b0b0"/><circle cx="657.0" cy="577.8" r="1.15" fill="#c02020"/><circle cx="657.0" cy="581.8" r="1.15" fill="#20c040"/><circle cx="657.0" cy="585.8" r="1.15" fill="#2030c0"/><circle cx="657.0" cy="589.8" r="1.15" fill="#b08080"/><rect x="702.0" y="580.8" width="22.6" height="28.1" rx="1.2" fill="#111211"/><rect x="702.4" y="581.7" width="21.8" height="6.4" rx="1.2" fill="url(#g_bgray)"/><rect x="702.4" y="581.7" width="21.8" height="6.4" rx="1.2" fill="url(#gloss)"/><rect x="703.5" y="582.7" width="16.7" height="3.6" rx="1.2" fill="#000" fill-opacity="0.40"/><circle cx="704.6" cy="598.8" r="1.25" fill="#ffffff"/><circle cx="721.8" cy="590.8" r="1.00" fill="#8a8a8a"/><circle cx="721.8" cy="594.8" r="1.30" fill="#ffffff"/><circle cx="721.8" cy="598.8" r="1.00" fill="#8a8a8a"/><rect x="758.8" y="590.3" width="23.2" height="11.7" rx="1.2" fill="#111211"/><rect x="759.2" y="591.2" width="22.4" height="6.0" rx="1.2" fill="url(#g_green)"/><rect x="759.2" y="591.2" width="22.4" height="6.0" rx="1.2" fill="url(#gloss)"/><rect x="760.3" y="592.2" width="17.2" height="3.2" rx="1.2" fill="#000" fill-opacity="0.40"/><circle cx="779.4" cy="599.2" r="1.10" fill="#b8b8b8"/><circle cx="761.4" cy="599.2" r="1.25" fill="#ffffff"/><rect x="651.2" y="597.5" width="22.7" height="11.4" rx="1.2" fill="#111211"/><rect x="651.6" y="598.4" width="21.9" height="6.0" rx="1.2" fill="url(#g_green)"/><rect x="651.6" y="598.4" width="21.9" height="6.0" rx="1.2" fill="url(#gloss)"/><rect x="652.7" y="599.4" width="16.8" height="3.2" rx="1.2" fill="#000" fill-opacity="0.40"/><circle cx="671.3" cy="606.3" r="1.25" fill="#ffffff"/><rect x="668.0" y="603.0" width="22.6" height="19.6" rx="1.2" fill="#111211"/><rect x="668.4" y="603.9" width="21.8" height="6.4" rx="1.2" fill="url(#g_dgreen)"/><rect x="668.4" y="603.9" width="21.8" height="6.4" rx="1.2" fill="url(#gloss)"/><rect x="669.5" y="604.9" width="16.7" height="3.6" rx="1.2" fill="#000" fill-opacity="0.40"/><circle cx="670.6" cy="613.0" r="1.25" fill="#9a9a9a"/><circle cx="670.6" cy="617.0" r="1.25" fill="#ffffff"/><circle cx="687.8" cy="613.0" r="1.30" fill="#ffffff"/><rect x="631.7" y="610.0" width="22.5" height="10.9" rx="1.2" fill="#111211"/><rect x="632.1" y="610.9" width="21.7" height="5.9" rx="1.2" fill="url(#g_green)"/><rect x="632.1" y="610.9" width="21.7" height="5.9" rx="1.2" fill="url(#gloss)"/><rect x="633.2" y="611.9" width="16.6" height="3.1" rx="1.2" fill="#000" fill-opacity="0.40"/><circle cx="651.6" cy="618.5" r="1.25" fill="#ffffff"/><rect x="636.7" y="626.7" width="22.9" height="11.3" rx="1.2" fill="#111211"/><rect x="637.1" y="627.6" width="22.1" height="6.0" rx="1.2" fill="url(#g_purple)"/><rect x="637.1" y="627.6" width="22.1" height="6.0" rx="1.2" fill="url(#gloss)"/><rect x="638.2" y="628.6" width="16.9" height="3.2" rx="1.2" fill="#000" fill-opacity="0.40"/><circle cx="657.0" cy="635.4" r="1.25" fill="#ffffff"/><rect x="663.3" y="626.7" width="22.9" height="11.3" rx="1.2" fill="#111211"/><rect x="663.7" y="627.6" width="22.1" height="6.0" rx="1.2" fill="url(#g_dgreen)"/><rect x="663.7" y="627.6" width="22.1" height="6.0" rx="1.2" fill="url(#gloss)"/><rect x="664.8" y="628.6" width="16.9" height="3.2" rx="1.2" fill="#000" fill-opacity="0.40"/><circle cx="683.6" cy="635.4" r="1.10" fill="#b8b8b8"/><circle cx="665.9" cy="635.4" r="1.25" fill="#ffffff"/><rect x="646.7" y="660.3" width="22.5" height="11.7" rx="1.2" fill="#111211"/><rect x="647.1" y="661.2" width="21.7" height="6.0" rx="1.2" fill="url(#g_magenta)"/><rect x="647.1" y="661.2" width="21.7" height="6.0" rx="1.2" fill="url(#gloss)"/><rect x="648.2" y="662.2" width="16.6" height="3.2" rx="1.2" fill="#000" fill-opacity="0.40"/><circle cx="666.6" cy="669.2" r="1.25" fill="#ffffff"/><rect x="639.2" y="682.0" width="22.8" height="11.4" rx="1.2" fill="#111211"/><rect x="639.6" y="682.9" width="22.0" height="6.0" rx="1.2" fill="url(#g_teal)"/><rect x="639.6" y="682.9" width="22.0" height="6.0" rx="1.2" fill="url(#gloss)"/><rect x="640.7" y="683.9" width="16.9" height="3.2" rx="1.2" fill="#000" fill-opacity="0.40"/><circle cx="659.4" cy="690.8" r="1.25" fill="#ffffff"/><rect x="673.3" y="678.3" width="22.6" height="15.1" rx="1.2" fill="#111211"/><rect x="673.7" y="679.2" width="21.8" height="6.4" rx="1.2" fill="url(#g_dgreen)"/><rect x="673.7" y="679.2" width="21.8" height="6.4" rx="1.2" fill="url(#gloss)"/><rect x="674.8" y="680.2" width="16.7" height="3.6" rx="1.2" fill="#000" fill-opacity="0.40"/><circle cx="675.9" cy="688.3" r="1.25" fill="#9a9a9a"/><circle cx="675.9" cy="692.3" r="1.25" fill="#ffffff"/><circle cx="693.1" cy="688.3" r="1.30" fill="#ffffff"/><rect x="701.2" y="678.0" width="22.7" height="15.4" rx="1.2" fill="#111211"/><rect x="701.6" y="678.9" width="21.9" height="6.4" rx="1.2" fill="url(#g_dgreen)"/><rect x="701.6" y="678.9" width="21.9" height="6.4" rx="1.2" fill="url(#gloss)"/><rect x="702.7" y="679.9" width="16.8" height="3.6" rx="1.2" fill="#000" fill-opacity="0.40"/><circle cx="703.8" cy="688.0" r="1.25" fill="#9a9a9a"/><circle cx="703.8" cy="692.0" r="1.25" fill="#ffffff"/><circle cx="721.1" cy="688.0" r="1.30" fill="#ffffff"/><rect x="733.3" y="683.0" width="22.9" height="11.2" rx="1.2" fill="#111211"/><rect x="733.7" y="683.9" width="22.1" height="6.0" rx="1.2" fill="url(#g_crimson)"/><rect x="733.7" y="683.9" width="22.1" height="6.0" rx="1.2" fill="url(#gloss)"/><rect x="734.8" y="684.9" width="16.9" height="3.2" rx="1.2" fill="#000" fill-opacity="0.40"/><circle cx="753.6" cy="691.7" r="1.10" fill="#b8b8b8"/><circle cx="735.9" cy="691.7" r="1.25" fill="#ffffff"/><rect x="668.0" y="699.7" width="22.6" height="27.1" rx="1.2" fill="#111211"/><rect x="668.4" y="700.6" width="21.8" height="6.4" rx="1.2" fill="url(#g_red)"/><rect x="668.4" y="700.6" width="21.8" height="6.4" rx="1.2" fill="url(#gloss)"/><rect x="669.5" y="701.6" width="16.7" height="3.6" rx="1.2" fill="#000" fill-opacity="0.40"/><circle cx="688.0" cy="709.3" r="1.15" fill="#b0b0b0"/><circle cx="688.0" cy="713.3" r="1.15" fill="#c02020"/><circle cx="688.0" cy="717.3" r="1.15" fill="#20c040"/><circle cx="688.0" cy="721.3" r="1.15" fill="#2030c0"/><circle cx="688.0" cy="725.3" r="1.15" fill="#b08080"/><rect x="286.2" y="93" width="1135.6" height="30.5" fill="url(#topfade)"/><rect x="286.2" y="93" width="16" height="676" fill="url(#lsh)"/><rect x="1409.8" y="93" width="12" height="676" fill="url(#rsh)"/><rect x="286.2" y="760.6" width="1136" height="8" fill="url(#bsh)"/><path d="M286.2 93 L291.2 93 L286.2 98 Z" fill="#2a7fe0"/><path d="M295.8 106.6 L302.4 101.4 L302.4 104.8 L310 104.8 L310 108.4 L302.4 108.4 L302.4 111.8 Z" fill="#8c8c8c"/><path d="M339.4 106.6 L332.8 101.4 L332.8 104.8 L325.2 104.8 L325.2 108.4 L332.8 108.4 L332.8 111.8 Z" fill="#8c8c8c"/><path d="M560.6 101.4 L565.4 106.6 L560.6 111.8" fill="none" stroke="#b0b0b0" stroke-width="1.3"/></g></svg>
<svg class="b" style="left:357.60px;top:100.20px;" width="16.644" height="16.416" viewBox="0 0 14.6 14.4"><rect x="0.3" y="0.6" width="5.8" height="4.8" rx="1" fill="#f0f0f0"/><rect x="9.6" y="1.6" width="4.6" height="3.4" rx="0.9" fill="#f0f0f0"/><rect x="9" y="8.4" width="4.6" height="3.4" rx="0.9" fill="#f0f0f0"/><rect x="0.8" y="10.4" width="4.2" height="3.4" rx="0.9" fill="#f0f0f0"/><path d="M6 3.2 H9.8 M3 5.2 V10.6 M5.2 4.6 L9.4 9.6" stroke="#f0f0f0" stroke-width="1.2" fill="none"/></svg>
<span class="t" style="left:45.80px;top:20.00px;font:400 9.6px/9.6px 'Liberation Sans',sans-serif;color:#d6d6d6;transform:scaleX(0.9568);">File</span>
<span class="t" style="left:79.00px;top:20.00px;font:400 9.6px/9.6px 'Liberation Sans',sans-serif;color:#d6d6d6;transform:scaleX(0.9790);">Edit</span>
<span class="t" style="left:113.00px;top:20.00px;font:400 9.6px/9.6px 'Liberation Sans',sans-serif;color:#d6d6d6;transform:scaleX(1.0500);">Asset</span>
<span class="t" style="left:156.00px;top:20.00px;font:400 9.6px/9.6px 'Liberation Sans',sans-serif;color:#d6d6d6;transform:scaleX(1.0022);">Window</span>
<span class="t" style="left:208.00px;top:20.00px;font:400 9.6px/9.6px 'Liberation Sans',sans-serif;color:#d6d6d6;transform:scaleX(1.0801);">Tools</span>
<span class="t" style="left:250.40px;top:20.00px;font:400 9.6px/9.6px 'Liberation Sans',sans-serif;color:#d6d6d6;transform:scaleX(1.0033);">Help</span>
<span class="t" style="left:69.20px;top:44.00px;font:400 9.6px/9.6px 'Liberation Sans',sans-serif;color:#c8c8c8;transform:scaleX(1.0163);">DemoMap•</span>
<span class="t" style="left:229.30px;top:44.00px;font:400 9.6px/9.6px 'Liberation Sans',sans-serif;color:#c8c8c8;transform:scaleX(0.9671);">MI_Wall_Painted_Eg</span>
<span class="t" style="left:389.30px;top:44.00px;font:400 9.6px/9.6px 'Liberation Sans',sans-serif;color:#ffffff;transform:scaleX(0.9654);">Adv_MatBlend_Eg_Mas...</span>
<span class="t" style="left:102.60px;top:70.00px;font:400 9.6px/9.6px 'Liberation Sans',sans-serif;color:#d6d6d6;transform:scaleX(0.9667);">Apply</span>
<span class="t" style="left:162.60px;top:70.00px;font:400 9.6px/9.6px 'Liberation Sans',sans-serif;color:#d6d6d6;transform:scaleX(1.0261);">Search</span>
<span class="t" style="left:230.00px;top:70.00px;font:400 9.6px/9.6px 'Liberation Sans',sans-serif;color:#d6d6d6;transform:scaleX(1.0002);">Home</span>
<span class="t" style="left:288.80px;top:70.00px;font:400 9.6px/9.6px 'Liberation Sans',sans-serif;color:#d6d6d6;transform:scaleX(1.0350);">Hierarchy</span>
<span class="t" style="left:376.40px;top:70.00px;font:400 9.6px/9.6px 'Liberation Sans',sans-serif;color:#d6d6d6;transform:scaleX(0.9999);">Live Update</span>
<span class="t" style="left:480.00px;top:70.00px;font:400 9.6px/9.6px 'Liberation Sans',sans-serif;color:#d6d6d6;transform:scaleX(0.9742);">Clean Graph</span>
<span class="t" style="left:577.60px;top:70.00px;font:400 9.6px/9.6px 'Liberation Sans',sans-serif;color:#d6d6d6;transform:scaleX(1.0135);">Preview State</span>
<span class="t" style="left:682.60px;top:70.00px;font:400 9.6px/9.6px 'Liberation Sans',sans-serif;color:#d6d6d6;transform:scaleX(0.9969);">Hide Unrelated</span>
<span class="t" style="left:800.20px;top:70.00px;font:400 9.6px/9.6px 'Liberation Sans',sans-serif;color:#d6d6d6;transform:scaleX(1.0057);">Stats</span>
<span class="t" style="left:859.40px;top:70.00px;font:400 9.6px/9.6px 'Liberation Sans',sans-serif;color:#d6d6d6;transform:scaleX(1.0158);">Platform Stats</span>
<span class="t" style="left:18.40px;top:436.00px;font:400 10.5px/10.5px 'Liberation Sans',sans-serif;color:#dcdcdc;transform:scaleX(0.9343);">Details</span>
<span class="t" style="left:140.80px;top:436.00px;font:400 10.5px/10.5px 'Liberation Sans',sans-serif;color:#dcdcdc;transform:scaleX(0.9469);">Parameters</span>
<span class="t" style="left:25.80px;top:461.00px;font:400 10px/10px 'Liberation Sans',sans-serif;color:#4e4e4e;transform:scaleX(0.9657);">Search</span>
<span class="t" style="left:14.70px;top:484.00px;font:700 9.6px/9.6px 'Liberation Sans',sans-serif;color:#e6e6e6;transform:scaleX(0.8567);">Physical Material</span>
<span class="t" style="left:14.70px;top:517.00px;font:400 9.6px/9.6px 'Liberation Sans',sans-serif;color:#cfcfcf;transform:scaleX(0.9101);">Phys Material</span>
<span class="t" style="left:127.40px;top:520.00px;font:700 7.6px/7.6px 'Liberation Sans',sans-serif;color:#f4f4f4;transform:scaleX(0.8217);">None</span>
<span class="t" style="left:166.60px;top:507.00px;font:400 9.6px/9.6px 'Liberation Sans',sans-serif;color:#d6d6d6;transform:scaleX(0.8545);">None</span>
<span class="t" style="left:14.70px;top:561.00px;font:400 9.6px/9.6px 'Liberation Sans',sans-serif;color:#cfcfcf;transform:scaleX(0.9092);">Phys Material Mask</span>
<span class="t" style="left:127.40px;top:564.00px;font:700 7.6px/7.6px 'Liberation Sans',sans-serif;color:#f4f4f4;transform:scaleX(0.8217);">None</span>
<span class="t" style="left:166.60px;top:550.00px;font:400 9.6px/9.6px 'Liberation Sans',sans-serif;color:#d6d6d6;transform:scaleX(0.8545);">None</span>
<span class="t" style="left:14.70px;top:593.00px;font:700 9.6px/9.6px 'Liberation Sans',sans-serif;color:#e6e6e6;transform:scaleX(0.8796);">Material</span>
<span class="t" style="left:14.70px;top:613.00px;font:400 9.6px/9.6px 'Liberation Sans',sans-serif;color:#cfcfcf;transform:scaleX(0.9004);">Material Domain</span>
<span class="t" style="left:121.80px;top:613.00px;font:400 9.6px/9.6px 'Liberation Sans',sans-serif;color:#d8d8d8;transform:scaleX(0.8949);">Surface</span>
<span class="t" style="left:14.70px;top:633.00px;font:400 9.6px/9.6px 'Liberation Sans',sans-serif;color:#cfcfcf;transform:scaleX(0.8691);">Blend Mode</span>
<span class="t" style="left:121.80px;top:633.00px;font:400 9.6px/9.6px 'Liberation Sans',sans-serif;color:#d8d8d8;transform:scaleX(0.8436);">Opaque</span>
<span class="t" style="left:14.70px;top:653.00px;font:400 9.6px/9.6px 'Liberation Sans',sans-serif;color:#cfcfcf;transform:scaleX(0.8732);">Shading Model</span>
<span class="t" style="left:121.80px;top:653.00px;font:400 9.6px/9.6px 'Liberation Sans',sans-serif;color:#d8d8d8;transform:scaleX(0.9120);">Default Lit</span>
<span class="t" style="left:14.70px;top:674.00px;font:400 9.6px/9.6px 'Liberation Sans',sans-serif;color:#cfcfcf;transform:scaleX(0.8859);">Two Sided</span>
<span class="t" style="left:14.70px;top:694.00px;font:400 9.6px/9.6px 'Liberation Sans',sans-serif;color:#cfcfcf;transform:scaleX(0.9149);">Use Material Attributes</span>
<span class="t" style="left:14.70px;top:714.00px;font:400 9.6px/9.6px 'Liberation Sans',sans-serif;color:#cfcfcf;transform:scaleX(0.8544);">Cast Ray Traced Shad...</span>
<span class="t" style="left:14.70px;top:747.00px;font:400 9.6px/9.6px 'Liberation Sans',sans-serif;color:#cfcfcf;transform:scaleX(0.8917);">Subsurface Profile</span>
<span class="t" style="left:127.40px;top:750.00px;font:700 7.6px/7.6px 'Liberation Sans',sans-serif;color:#f4f4f4;transform:scaleX(0.8217);">None</span>
<span class="t" style="left:166.60px;top:738.00px;font:400 9.6px/9.6px 'Liberation Sans',sans-serif;color:#8a8a8a;transform:scaleX(0.8545);">None</span>
<span class="t" style="left:18.60px;top:778.00px;font:400 10.5px/10.5px 'Liberation Sans',sans-serif;color:#d6d6d6;transform:scaleX(0.9193);">Content Drawer</span>
<span class="t" style="left:118.20px;top:778.00px;font:400 10.5px/10.5px 'Liberation Sans',sans-serif;color:#d6d6d6;transform:scaleX(0.9121);">Output Log</span>
<span class="t" style="left:199.80px;top:778.00px;font:400 10.5px/10.5px 'Liberation Sans',sans-serif;color:#d6d6d6;transform:scaleX(0.8840);">Cmd</span>
<span class="t" style="left:249.00px;top:779.00px;font:400 8.6px/8.6px 'Liberation Mono',monospace;color:#4c4c4c;transform:scaleX(1.0248);">Enter Console Command</span>
<span class="t" style="left:1267.20px;top:777.00px;font:400 10.5px/10.5px 'Liberation Sans',sans-serif;color:#d6d6d6;transform:scaleX(0.9043);">5 Unsaved</span>
<span class="t" style="left:1350.20px;top:777.00px;font:400 10.5px/10.5px 'Liberation Sans',sans-serif;color:#d6d6d6;transform:scaleX(0.9085);">Revision Control</span>
<span class="t" style="left:385.80px;top:99.00px;font:400 14px/14px 'Liberation Sans',sans-serif;color:#a4a4a4;transform:scaleX(1.0039);">Adv_MatBlend_Eg_Master</span>
<span class="t" style="left:573.80px;top:99.00px;font:400 14px/14px 'Liberation Sans',sans-serif;color:#a4a4a4;transform:scaleX(1.0303);">Material Graph</span>
<span class="t" style="left:1365.20px;top:98.00px;font:700 17px/17px 'Liberation Sans',sans-serif;color:#343434;transform:scaleX(0.7896);">Zoom -8</span>
<span class="t" style="left:1217.40px;top:708.00px;font:700 47.5px/47.5px 'Liberation Sans',sans-serif;color:rgba(255,255,255,0.235);transform:scaleX(0.8087);">MATERIAL</span>
<span class="t" style="left:32.40px;top:100.00px;font:400 10px/10px 'Liberation Sans',sans-serif;color:#e2e2e2;transform:scaleX(0.9914);">Perspective</span>
<span class="t" style="left:116.60px;top:100.00px;font:400 10px/10px 'Liberation Sans',sans-serif;color:#e2e2e2;transform:scaleX(0.9657);">Lit</span>
<span class="t" style="left:145.40px;top:100.00px;font:400 10px/10px 'Liberation Sans',sans-serif;color:#e2e2e2;transform:scaleX(0.9114);">Show</span>
<span class="t" style="left:22.20px;top:386.00px;font:700 8px/8px 'Liberation Sans',sans-serif;color:#3030e8;transform:scaleX(1.0633);">Z</span>
<span class="t" style="left:22.40px;top:408.00px;font:700 8px/8px 'Liberation Sans',sans-serif;color:#e83030;transform:scaleX(0.9731);">X</span>
</body></html>
